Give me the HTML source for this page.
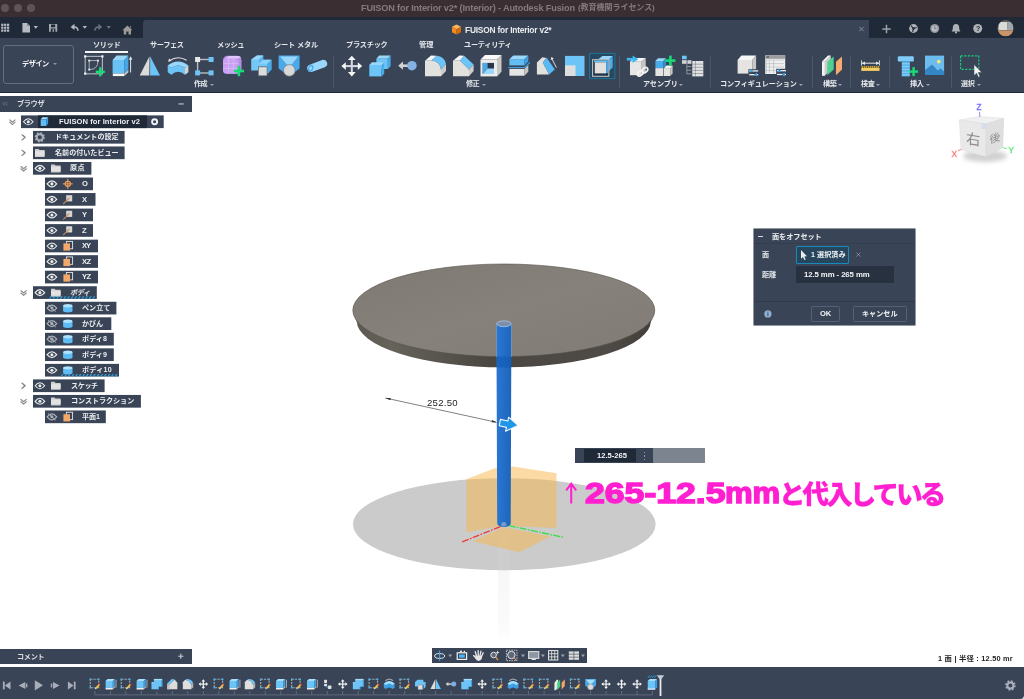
<!DOCTYPE html><html lang="ja"><head><meta charset="utf-8"><title>FUISON for Interior v2</title><style>
*{box-sizing:border-box;margin:0;padding:0}
html,body{width:1024px;height:699px;overflow:hidden;background:#fff}
body{position:relative;font-family:"Liberation Sans","Noto Sans CJK JP",sans-serif;font-size:7px;font-weight:bold;color:#e4e7eb}
.a{position:absolute}
.t{position:absolute;white-space:nowrap;line-height:10px;height:10px;will-change:transform}
.row{position:absolute;height:12.6px;background:#394456}
svg{position:absolute;left:0;top:0;overflow:visible}
</style></head><body>
<div class="a" style="left:0;top:0;width:1024px;height:17px;background:#3b2e32"></div>
<div class="a" style="left:0.5999999999999996px;top:4.4px;width:8px;height:8px;border-radius:50%;background:#5f5258"></div>
<div class="a" style="left:13.5px;top:4.4px;width:8px;height:8px;border-radius:50%;background:#5f5258"></div>
<div class="a" style="left:26.5px;top:4.4px;width:8px;height:8px;border-radius:50%;background:#5f5258"></div>
<div class="t" style="left:361px;top:2.6px;font-size:9.2px;color:#85797d;letter-spacing:-0.17px;">FUISON for Interior v2* (Interior) - Autodesk Fusion</div>
<div class="t" style="left:578.2px;top:2.6px;font-size:8px;color:#85797d;letter-spacing:-0.04px;">(教育機関ライセンス)</div>
<div class="a" style="left:0;top:17px;width:1024px;height:21px;background:#202938"></div>
<div class="a" style="left:143px;top:20px;width:726px;height:18px;background:#394456;border-radius:3px 0 0 0"></div>
<div class="t" style="left:464.6px;top:25.0px;font-size:8.4px;color:#e9ebee;letter-spacing:-0.21px;">FUISON for Interior v2*</div>
<div class="a" style="left:0;top:38px;width:1024px;height:53.8px;background:#394456"></div>
<div class="a" style="left:0;top:91.8px;width:1024px;height:1.3px;background:#1f2a3a"></div>
<div class="a" style="left:3px;top:45.2px;width:70.6px;height:39.2px;border:1px solid #626f83;border-radius:3px"></div>
<div class="t" style="left:21.5px;top:59.0px;font-size:7.2px;color:#f2f3f5;letter-spacing:-0.49px;">デザイン</div>
<div class="a" style="left:53px;top:63px;width:0;height:0;border:2px solid transparent;border-top:2.6px solid #8b94a1"></div>
<div class="t" style="left:93.2px;top:40.0px;font-size:7.2px;color:#e4e7eb;letter-spacing:-0.39px;">ソリッド</div>
<div class="t" style="left:149.8px;top:40.0px;font-size:7.2px;color:#e4e7eb;letter-spacing:-0.38px;">サーフェス</div>
<div class="t" style="left:216.6px;top:40.0px;font-size:7.2px;color:#e4e7eb;letter-spacing:-0.46px;">メッシュ</div>
<div class="t" style="left:273.5px;top:40.0px;font-size:7.2px;color:#e4e7eb;letter-spacing:-0.17px;">シート メタル</div>
<div class="t" style="left:346.4px;top:40.0px;font-size:7.2px;color:#e4e7eb;letter-spacing:-0.24px;">プラスチック</div>
<div class="t" style="left:419.2px;top:40.0px;font-size:7.2px;color:#e4e7eb;letter-spacing:0.01px;">管理</div>
<div class="t" style="left:463.7px;top:40.0px;font-size:7.2px;color:#e4e7eb;letter-spacing:-0.29px;">ユーティリティ</div>
<div class="a" style="left:84.8px;top:51.3px;width:43.7px;height:2px;background:#f4f5f6"></div>
<div class="t" style="left:194.4px;top:79.4px;font-size:7.1px;color:#e6e8ec;letter-spacing:-0.49px;">作成</div>
<div class="a" style="left:210px;top:83.6px;width:0;height:0;border:2px solid transparent;border-top:2.4px solid #9aa2ae"></div>
<div class="t" style="left:466px;top:79.4px;font-size:7.1px;color:#e6e8ec;letter-spacing:-0.49px;">修正</div>
<div class="a" style="left:482.2px;top:83.6px;width:0;height:0;border:2px solid transparent;border-top:2.4px solid #9aa2ae"></div>
<div class="t" style="left:643.3px;top:79.4px;font-size:7.1px;color:#e6e8ec;letter-spacing:-0.08px;">アセンブリ</div>
<div class="a" style="left:679.4px;top:83.6px;width:0;height:0;border:2px solid transparent;border-top:2.4px solid #9aa2ae"></div>
<div class="t" style="left:720px;top:79.4px;font-size:7.1px;color:#e6e8ec;letter-spacing:-0.06px;">コンフィギュレーション</div>
<div class="a" style="left:798.5px;top:83.6px;width:0;height:0;border:2px solid transparent;border-top:2.4px solid #9aa2ae"></div>
<div class="t" style="left:822.7px;top:79.4px;font-size:7.1px;color:#e6e8ec;letter-spacing:-0.29px;">構築</div>
<div class="a" style="left:838.3px;top:83.6px;width:0;height:0;border:2px solid transparent;border-top:2.4px solid #9aa2ae"></div>
<div class="t" style="left:861.2px;top:79.4px;font-size:7.1px;color:#e6e8ec;letter-spacing:-0.39px;">検査</div>
<div class="a" style="left:876.4px;top:83.6px;width:0;height:0;border:2px solid transparent;border-top:2.4px solid #9aa2ae"></div>
<div class="t" style="left:910px;top:79.4px;font-size:7.1px;color:#e6e8ec;letter-spacing:-0.29px;">挿入</div>
<div class="a" style="left:925.6px;top:83.6px;width:0;height:0;border:2px solid transparent;border-top:2.4px solid #9aa2ae"></div>
<div class="t" style="left:961.4px;top:79.4px;font-size:7.1px;color:#e6e8ec;letter-spacing:-0.39px;">選択</div>
<div class="a" style="left:977px;top:83.6px;width:0;height:0;border:2px solid transparent;border-top:2.4px solid #9aa2ae"></div>
<div class="a" style="left:333.3px;top:55.5px;width:1px;height:32px;background:#4b5667"></div>
<div class="a" style="left:618.5px;top:55.5px;width:1px;height:32px;background:#4b5667"></div>
<div class="a" style="left:709.5px;top:55.5px;width:1px;height:32px;background:#4b5667"></div>
<div class="a" style="left:812.0px;top:55.5px;width:1px;height:32px;background:#4b5667"></div>
<div class="a" style="left:850.1px;top:55.5px;width:1px;height:32px;background:#4b5667"></div>
<div class="a" style="left:888.7px;top:55.5px;width:1px;height:32px;background:#4b5667"></div>
<div class="a" style="left:951.2px;top:55.5px;width:1px;height:32px;background:#4b5667"></div>
<svg width="1024" height="100" viewBox="0 0 1024 100"><rect x="1.2" y="23.7" width="2.2" height="2.2" fill="#b9bdc5" /><rect x="1.2" y="26.599999999999998" width="2.2" height="2.2" fill="#b9bdc5" /><rect x="1.2" y="29.5" width="2.2" height="2.2" fill="#b9bdc5" /><rect x="4.1" y="23.7" width="2.2" height="2.2" fill="#b9bdc5" /><rect x="4.1" y="26.599999999999998" width="2.2" height="2.2" fill="#b9bdc5" /><rect x="4.1" y="29.5" width="2.2" height="2.2" fill="#b9bdc5" /><rect x="7.0" y="23.7" width="2.2" height="2.2" fill="#b9bdc5" /><rect x="7.0" y="26.599999999999998" width="2.2" height="2.2" fill="#b9bdc5" /><rect x="7.0" y="29.5" width="2.2" height="2.2" fill="#b9bdc5" /><path d="M22.4 23 H27 L30 26 V32.6 H22.4Z" fill="#b6bac1" /><path d="M27 23 L30 26 H27Z" fill="#7d8590" /><path d="M33.6 26 H38 L35.8 28.8Z" fill="#b6bac1" /><path d="M49 24 H57.2 V31.8 H49Z M51 24.6 V27.2 H55.2 V24.6Z M50.8 28.6 V31.8 H55.4 V28.6Z" fill="#a2a8b1" fill-rule="evenodd"/><rect x="52.6" y="29.2" width="1.3" height="2.6" fill="#a2a8b1" /><path d="M70.6 26.9 L74.5 23.8 V30Z" fill="#b6bac1" /><path d="M74 26.9 Q77.7 26.7 78 30.8" fill="none" stroke="#b6bac1" stroke-width="1.5"/><path d="M82.6 26 H87 L84.8 28.8Z" fill="#b6bac1" /><path d="M102.2 26.9 L98.3 23.8 V30Z" fill="#6a7382" /><path d="M98.8 26.9 Q95.1 26.7 94.8 30.8" fill="none" stroke="#6a7382" stroke-width="1.5"/><path d="M106.5 26 H110.9 L108.7 28.8Z" fill="#6a7382" /><path d="M127.4 25.6 L122.4 30.2 H123.8 V34.6 H126.3 V31.6 H128.5 V34.6 H131 V30.2 H132.4Z M130 26.2 H131 V28 L130 27.2Z" fill="#9d9b97" /><path d="M456.5 24.6 L461 26.8 L456.5 29.2 L452 26.8Z" fill="#ffb45e" /><path d="M452 26.8 L456.5 29.2 V34.6 L452 32.2Z" fill="#f58a1f" /><path d="M461 26.8 L456.5 29.2 V34.6 L461 32.2Z" fill="#d96c0a" /><line x1="859.3" y1="26.9" x2="863.7" y2="31.3" stroke="#8d95a0" stroke-width="0.9" /><line x1="863.7" y1="26.9" x2="859.3" y2="31.3" stroke="#8d95a0" stroke-width="0.9" /><rect x="882.3" y="28.3" width="8.4" height="1.5" fill="#9ba0a8" /><rect x="885.75" y="24.8" width="1.5" height="8.4" fill="#9ba0a8" /><circle cx="913.5" cy="28.5" r="4.4" fill="#aeb1b6" /><path d="M913.5 28.5 L911 25.6 M913.5 28.5 L916.6 27.4 M913.5 28.5 L912.6 32" fill="none" stroke="#202938" stroke-width="1.1"/><circle cx="913.5" cy="28.5" r="1.2" fill="#202938" /><circle cx="934.7" cy="28.5" r="4.5" fill="#8f949c" /><circle cx="934.7" cy="28.5" r="3.1" fill="#b9bcc1" /><path d="M934.7 26.3 V28.7 H936.6" fill="none" stroke="#6b717b" stroke-width="0.9"/><path d="M956 24 Q959.2 24.2 959.2 28 Q959.2 30.6 960.4 31.4 H951.6 Q952.8 30.6 952.8 28 Q952.8 24.2 956 24Z" fill="#aeb1b6" /><circle cx="956" cy="32.4" r="1.1" fill="#aeb1b6" /><circle cx="977.7" cy="28.5" r="4.5" fill="#aeb1b6" /><circle cx="1005.6" cy="28.3" r="8" fill="#6d6a66" /><clipPath id="av"><circle cx="1005.6" cy="28.3" r="8"/></clipPath><g clip-path="url(#av)"><rect x="997" y="20" width="18" height="9" fill="#5b5d5e"/><rect x="998.5" y="22" width="9" height="8" fill="#d9dcd6"/><rect x="1008" y="22" width="5" height="8" fill="#9ea7ad"/><rect x="997" y="30.5" width="18" height="6" fill="#c8946a"/></g><rect x="85.2" y="56.4" width="17.2" height="17.4" fill="none" stroke="#a9b0b9" stroke-width="1.2"/><rect x="84.10000000000001" y="55.3" width="2.2" height="2.2" fill="#f2f2f2" /><rect x="101.30000000000001" y="55.3" width="2.2" height="2.2" fill="#f2f2f2" /><rect x="84.10000000000001" y="72.5" width="2.2" height="2.2" fill="#f2f2f2" /><path d="M89.2 60.6 H98 Q98 69.6 89.2 69.6Z" fill="none" stroke="#b4bac2" stroke-width="0.9"/><rect x="88.3" y="59.7" width="1.8" height="1.8" fill="#f2f2f2" /><rect x="97.1" y="59.7" width="1.8" height="1.8" fill="#f2f2f2" /><rect x="88.3" y="68.69999999999999" width="1.8" height="1.8" fill="#f2f2f2" /><rect x="95.8" y="70.6" width="9.0" height="2.4" fill="#18dc76" /><rect x="99.1" y="67.3" width="2.4" height="9.0" fill="#18dc76" /><rect x="112.6" y="60" width="11.8" height="13.4" fill="#68c2f5" /><path d="M112.6 60 L116.6 55.6 L128.39999999999998 55.6 L124.39999999999999 60Z" fill="#9ad8fb" /><path d="M124.39999999999999 60 L128.39999999999998 55.6 L128.39999999999998 69.0 L124.39999999999999 73.4Z" fill="#46a6e8" /><rect x="112.8" y="73.5" width="11.6" height="2.6" fill="#f6f6f6" /><path d="M124.4 73.5 L128.4 69.6 V72.2 L124.4 76.1Z" fill="#c6c6c6" /><line x1="130.6" y1="58" x2="130.6" y2="72.5" stroke="#e6e6e6" stroke-width="1" /><path d="M128.8 59.8 L130.6 56.2 L132.4 59.8Z" fill="#e6e6e6" /><path d="M149.5 56.3 L139.7 75.4 H149.3Z" fill="#dadada" /><path d="M150.1 56.3 V75.4 H160Z" fill="#6cc5f6" /><path d="M169.6 60.6 Q178 55 186.6 60.2" fill="none" stroke="#e6e6e6" stroke-width="1.1"/><path d="M168 61.8 L169.2 58.4 L171.6 61Z" fill="#e6e6e6" /><path d="M167.7 65.4 Q178 57.4 188.4 65.4 L185 68 Q178 63.2 171.4 68Z" fill="#9ad8fb" /><path d="M167.7 65.4 L171.4 68 Q178 63.2 185 68 V74.8 Q178 68.6 171.4 74.8 L167.7 72.2Z" fill="#6cc5f6" /><path d="M185 68 L188.4 65.4 V72.2 L185 74.8Z" fill="#d6d4d1" /><line x1="197.5" y1="59.5" x2="209" y2="59.5" stroke="#b9bdc3" stroke-width="1.4" /><line x1="197.6" y1="59.5" x2="197.6" y2="73" stroke="#b9bdc3" stroke-width="1.4" /><line x1="197.5" y1="73" x2="209" y2="73" stroke="#b9bdc3" stroke-width="1.4" /><rect x="195.1" y="57" width="5" height="5" fill="#e9e9e9" /><rect x="208.6" y="57" width="5" height="5" fill="#6cc5f6" /><rect x="195.1" y="70.4" width="5" height="5" fill="#6cc5f6" /><rect x="208.6" y="70.4" width="5" height="5" fill="#6cc5f6" /><rect x="223" y="55.8" width="18.5" height="18" fill="#b98be8" rx="4.5"/><rect x="223" y="58.2" width="15.6" height="15.6" fill="#c9a0f2" rx="3.6"/><path d="M225.4 58.4 L228.6 55.9 H238.6 Q240.4 56 241 57.4 L237.6 58.4Z" fill="#e0c6fb" /><line x1="228.4" y1="58.6" x2="228.4" y2="73.4" stroke="#dcc2f8" stroke-width="0.7" /><line x1="233.4" y1="58.6" x2="233.4" y2="73.4" stroke="#dcc2f8" stroke-width="0.7" /><line x1="223.4" y1="63.4" x2="238.4" y2="63.4" stroke="#dcc2f8" stroke-width="0.7" /><line x1="223.4" y1="68.4" x2="238.4" y2="68.4" stroke="#dcc2f8" stroke-width="0.7" /><rect x="233.70000000000002" y="69.7" width="10.4" height="2.6" fill="#18dc76" /><rect x="237.6" y="65.8" width="2.6" height="10.4" fill="#18dc76" /><path d="M251.2 59.4 L257 55.4 H263.2 V59.8 H271.4 V69.4 L267.2 74 V66.8 H258.2 V70.4 H251.2Z" fill="#74c8f6" /><path d="M251.2 59.4 L257 55.4 H263.2 L259 59.4Z" fill="#9ad8fb" /><path d="M259 59.4 L263.2 59.8 H271.4 L267.2 63.8 H259Z" fill="#8ed3f9" /><path d="M267.2 63.8 L271.4 59.8 V69.4 L267.2 74Z" fill="#4aa9e9" /><path d="M259 59.4 L263.2 55.4 V59.8 L259 63.4Z" fill="#58b4ee" /><rect x="258.4" y="66.9" width="8.6" height="8.9" fill="#dedcd9" stroke="#5f6975" stroke-width="0.6"/><path d="M278.6 55.6 H299.6 V68.4 L295 72 H283.4 L278.6 68.4Z" fill="#4aa9e9" /><path d="M280.2 56.4 H298 L289.3 67.5Z" fill="#9ad8fb" /><circle cx="289.3" cy="70.4" r="5.8" fill="#d8d8d8" stroke="#6e7883" stroke-width="0.7"/><line x1="311" y1="68.2" x2="323.4" y2="63.6" stroke="#9ad8fb" stroke-width="7.6" stroke-linecap="round"/><ellipse cx="310.6" cy="68.3" rx="2.6" ry="3.7" transform="rotate(20 310.6 68.3)" fill="#4aa9e9"/><ellipse cx="310.6" cy="68.3" rx="1.3" ry="2.2" transform="rotate(20 310.6 68.3)" fill="#9ad8fb"/><line x1="343.8" y1="66.1" x2="359.8" y2="66.1" stroke="#d4d7dc" stroke-width="2.1" /><line x1="351.8" y1="58.099999999999994" x2="351.8" y2="74.1" stroke="#d4d7dc" stroke-width="2.1" /><path d="M341.40000000000003 66.1 l4.4 -3.9 v7.8Z M362.2 66.1 l-4.4 -3.9 v7.8Z M351.8 55.699999999999996 l-3.9 4.4 h7.8Z M351.8 76.5 l-3.9 -4.4 h7.8Z" fill="#f4f4f4" /><rect x="376.4" y="58.4" width="11.4" height="10.6" fill="#6cc5f6" /><path d="M376.4 58.4 L379.2 55.6 L390.59999999999997 55.6 L387.79999999999995 58.4Z" fill="#9ad8fb" /><path d="M387.79999999999995 58.4 L390.59999999999997 55.6 L390.59999999999997 66.2 L387.79999999999995 69.0Z" fill="#4aa9e9" /><rect x="369.3" y="65" width="12.3" height="11.4" fill="#6cc5f6" /><path d="M369.3 65 L371.90000000000003 62.3 L384.20000000000005 62.3 L381.6 65Z" fill="#9ad8fb" /><path d="M381.6 65 L384.20000000000005 62.3 L384.20000000000005 73.7 L381.6 76.4Z" fill="#4aa9e9" /><circle cx="411.9" cy="65.7" r="4.8" fill="#86b1e5" /><rect x="401.5" y="64.4" width="6" height="2.6" fill="#d2d2d2" /><path d="M398.2 65.7 L403 61.6 V69.8Z" fill="#d2d2d2" /><path d="M425 60.8 L431.6 60.6 Q439.6 61 441 69.6 V76.3 H425Z" fill="#e3e1de" /><path d="M425 60.8 L431 55.5 L436.6 55.7 L431.6 60.6Z" fill="#f6f6f6" /><path d="M431.6 60.6 L436.6 55.7 Q444.6 56.4 446 64 L441 69.6 Q439.6 61 431.6 60.6Z" fill="#6cc5f6" /><path d="M441 69.6 L446 64 V71 L441 76.3Z" fill="#cfcdca" /><path d="M453 60.8 L460 60.6 L469 69.6 V76.3 H453Z" fill="#e3e1de" /><path d="M453 60.8 L459.4 55.5 L464.2 55.8 L460 60.6Z" fill="#f6f6f6" /><path d="M460 60.6 L464.2 55.8 L473.6 64.4 L469 69.6Z" fill="#6cc5f6" /><path d="M469 69.6 L473.6 64.4 V71 L469 76.3Z" fill="#cfcdca" /><rect x="480.5" y="59.6" width="16.5" height="16.8" fill="#ececec" /><path d="M480.5 59.6 L485.0 55.0 L501.5 55.0 L497.0 59.6Z" fill="#fafafa" /><path d="M497.0 59.6 L501.5 55.0 L501.5 71.80000000000001 L497.0 76.4Z" fill="#c9c7c4" /><rect x="482.7" y="62.9" width="11.3" height="11.1" fill="#2a3648" /><path d="M482.7 62.9 H487.6 V68.4 L482.7 74Z" fill="#4aa9e9" /><path d="M482.7 74 L487.6 68.4 H494 V74Z" fill="#9ad8fb" /><rect x="509.4" y="59.2" width="15" height="6.2" fill="#62bdf4" /><path d="M509.4 59.2 L513.3 55.400000000000006 L528.3 55.400000000000006 L524.4 59.2Z" fill="#9ad8fb" /><path d="M524.4 59.2 L528.3 55.400000000000006 L528.3 61.60000000000001 L524.4 65.4Z" fill="#3f9fe3" /><path d="M508.2 67.5 H524.6 L529.9 62.4" fill="none" stroke="#3f9fe3" stroke-width="1.2"/><rect x="509.4" y="68.9" width="15" height="6.8" fill="#e4e4e4" /><path d="M524.4 68.9 L528.3 65 V71.8 L524.4 75.7Z" fill="#c6c6c6" /><path d="M536.9 74.4 V62.5 L542.4 57.2 L546.4 58 L542.8 62.6 L549.1 74.4Z" fill="#e3e1de" /><path d="M542.8 62.6 L546.8 57.7 L554.8 69.6 L549.1 74.4Z" fill="#5ab8f3" /><line x1="552" y1="59" x2="556.4" y2="67.6" stroke="#eeeeee" stroke-width="0.9" /><path d="M550.6 60 L551.4 56.9 L553.8 58.6Z" fill="#eeeeee" /><rect x="565" y="55.9" width="19.5" height="20.1" fill="#6cc5f6" /><rect x="565" y="65.3" width="10.5" height="10.7" fill="#dedede" /><rect x="589.6" y="53.4" width="25.2" height="25.2" fill="#27495f" stroke="#1d7599" stroke-width="1"/><path d="M598 59.6 L602.4 56 H612.7 L609 59.6Z" fill="#9ad8fb" /><path d="M609 59.6 L612.7 56 V67.2 L609 71Z" fill="#4aa9e9" /><rect x="592.6" y="59.7" width="16.2" height="16.6" fill="#1f3448" stroke="#c2c2c2" stroke-width="1.1"/><rect x="594.2" y="60.4" width="13.8" height="2" fill="#6cc5f6" /><rect x="606.2" y="60.4" width="1.9" height="12.8" fill="#4aa9e9" /><rect x="594.8" y="62.4" width="11.3" height="11" fill="#e2e0de" /><rect x="630" y="61.4" width="11.7" height="13.8" fill="#e6e6e6" /><path d="M630 61.4 L634 57.9 L645.7 57.9 L641.7 61.4Z" fill="#f6f6f6" /><path d="M641.7 61.4 L645.7 57.9 L645.7 71.7 L641.7 75.2Z" fill="#c9c7c4" /><rect x="626.8" y="57.9" width="7" height="2.6" fill="#3db8f5" /><path d="M632.6 55.4 L638.4 59.2 L632.6 63Z" fill="#3db8f5" /><g fill="none" stroke="#f4f4f4" stroke-width="1.6"><ellipse cx="640.2" cy="73.4" rx="3.3" ry="2.2" transform="rotate(-36 640.2 73.4)"/><ellipse cx="644.8" cy="70.2" rx="3.3" ry="2.2" transform="rotate(-36 644.8 70.2)"/></g><rect x="655.4" y="61" width="8" height="7.4" fill="#4aa9e9" /><path d="M655.4 61 L658.0 58.2 L666.0 58.2 L663.4 61Z" fill="#9ad8fb" /><path d="M663.4 61 L666.0 58.2 L666.0 65.60000000000001 L663.4 68.4Z" fill="#2e8fd8" /><rect x="655.4" y="68.2" width="8" height="7.8" fill="#e6e4e2" /><rect x="664" y="68.2" width="6.2" height="7.8" fill="#e6e4e2" /><path d="M664 68.2 L666.4 65.60000000000001 L672.6 65.60000000000001 L670.2 68.2Z" fill="#f6f6f6" /><path d="M670.2 68.2 L672.6 65.60000000000001 L672.6 73.4 L670.2 76.0Z" fill="#c9c7c4" /><rect x="665.4" y="59.300000000000004" width="10" height="2.6" fill="#18dc76" /><rect x="669.1" y="55.6" width="2.6" height="10" fill="#18dc76" /><rect x="682" y="55.7" width="4.7" height="3.6" fill="#6cc5f6" /><rect x="682" y="60.2" width="4.7" height="3.6" fill="#d0d3d8" /><rect x="687.4" y="60.2" width="4" height="3.6" fill="#d0d3d8" /><line x1="686.8" y1="64" x2="686.8" y2="74" stroke="#aab0b8" stroke-width="0.7" /><line x1="686.8" y1="66.6" x2="691.4" y2="66.6" stroke="#aab0b8" stroke-width="0.8" /><line x1="686.8" y1="70.2" x2="691.4" y2="70.2" stroke="#aab0b8" stroke-width="0.8" /><line x1="686.8" y1="73.8" x2="691.4" y2="73.8" stroke="#aab0b8" stroke-width="0.8" /><rect x="692.3" y="61" width="11" height="15.4" fill="#e2e2e2" /><line x1="692.3" y1="64.2" x2="703.3" y2="64.2" stroke="#737d8a" stroke-width="0.6" /><line x1="692.3" y1="67.3" x2="703.3" y2="67.3" stroke="#737d8a" stroke-width="0.6" /><line x1="692.3" y1="70.4" x2="703.3" y2="70.4" stroke="#737d8a" stroke-width="0.6" /><line x1="692.3" y1="73.5" x2="703.3" y2="73.5" stroke="#737d8a" stroke-width="0.6" /><line x1="695.4" y1="61" x2="695.4" y2="76.4" stroke="#737d8a" stroke-width="0.6" /><rect x="737.6" y="60" width="14.7" height="13.6" fill="#e6e4e2" /><path d="M737.6 60 L741.4 55.4 L756.1 55.4 L752.3000000000001 60Z" fill="#f6f6f6" /><path d="M752.3000000000001 60 L756.1 55.4 L756.1 69.0 L752.3000000000001 73.6Z" fill="#c9c7c4" /><rect x="748.4" y="69.2" width="10.6" height="7.4" fill="#394456" /><line x1="749.2" y1="70.9" x2="758.2" y2="70.9" stroke="#f2f2f2" stroke-width="1.3" /><line x1="749.2" y1="74.7" x2="758.2" y2="74.7" stroke="#f2f2f2" stroke-width="1.3" /><path d="M750.4000000000001 69.0 l3.2 1.9 l-3.2 1.9Z" fill="#2fa4f0" /><path d="M757.0 72.80000000000001 l-3.2 1.9 l3.2 1.9Z" fill="#2fa4f0" /><rect x="765.2" y="55.4" width="20" height="18.6" fill="#efefef" /><rect x="765.2" y="55.4" width="20" height="3.4" fill="#9c9c9c" /><rect x="766.6" y="56.4" width="2.4" height="1.2" fill="#4d4d4d" /><line x1="769.4" y1="60" x2="769.4" y2="73" stroke="#a5aab1" stroke-width="0.5" /><line x1="773.6" y1="60" x2="773.6" y2="73" stroke="#a5aab1" stroke-width="0.5" /><line x1="766.4" y1="63.6" x2="784" y2="63.6" stroke="#a5aab1" stroke-width="0.5" /><line x1="766.4" y1="67" x2="784" y2="67" stroke="#a5aab1" stroke-width="0.5" /><line x1="766.4" y1="70.4" x2="784" y2="70.4" stroke="#a5aab1" stroke-width="0.5" /><line x1="766.4" y1="60" x2="784" y2="60" stroke="#a5aab1" stroke-width="0.5" /><line x1="766.4" y1="60" x2="766.4" y2="73" stroke="#a5aab1" stroke-width="0.5" /><rect x="776.2" y="68.8" width="10.4" height="7.8" fill="#394456" /><line x1="777" y1="70.7" x2="786" y2="70.7" stroke="#f2f2f2" stroke-width="1.3" /><line x1="777" y1="74.5" x2="786" y2="74.5" stroke="#f2f2f2" stroke-width="1.3" /><path d="M778.2 68.8 l3.2 1.9 l-3.2 1.9Z" fill="#2fa4f0" /><path d="M784.8 72.60000000000001 l-3.2 1.9 l3.2 1.9Z" fill="#2fa4f0" /><path d="M824.8 61.4 L830.8 55.4 V69.6 L824.8 75.8Z" fill="#cfcdca" /><rect x="822" y="61.4" width="2.9" height="14.4" fill="#f4f4f4" /><path d="M822 61.4 L828 55.4 H830.8 L824.8 61.4Z" fill="#fafafa" /><path d="M827.3 61.8 L833.7 56.4 V69.4 L827.3 75.3Z" fill="#4fd191" /><path d="M836 61.8 L842 56.4 V69.4 L836 75.3Z" fill="#f6ab6e" /><line x1="862" y1="63.2" x2="879" y2="63.2" stroke="#e6e6e6" stroke-width="1" /><line x1="861.5" y1="60.4" x2="861.5" y2="65.6" stroke="#e6e6e6" stroke-width="0.9" /><line x1="879.4" y1="60.4" x2="879.4" y2="65.6" stroke="#e6e6e6" stroke-width="0.9" /><path d="M861.8 63.2 l3.2 -1.7 v3.4Z M879.2 63.2 l-3.2 -1.7 v3.4Z" fill="#e6e6e6" /><rect x="861.3" y="66" width="18.2" height="2.2" fill="#7a6428" /><rect x="861.3" y="68" width="18.2" height="2.9" fill="#f3cf63" /><line x1="862.4" y1="66" x2="862.4" y2="68" stroke="#e9c455" stroke-width="0.7" /><line x1="864.4" y1="66" x2="864.4" y2="68" stroke="#e9c455" stroke-width="0.7" /><line x1="866.4" y1="66" x2="866.4" y2="68" stroke="#e9c455" stroke-width="0.7" /><line x1="868.4" y1="66" x2="868.4" y2="68" stroke="#e9c455" stroke-width="0.7" /><line x1="870.4" y1="66" x2="870.4" y2="68" stroke="#e9c455" stroke-width="0.7" /><line x1="872.4" y1="66" x2="872.4" y2="68" stroke="#e9c455" stroke-width="0.7" /><line x1="874.4" y1="66" x2="874.4" y2="68" stroke="#e9c455" stroke-width="0.7" /><line x1="876.4" y1="66" x2="876.4" y2="68" stroke="#e9c455" stroke-width="0.7" /><line x1="878.4" y1="66" x2="878.4" y2="68" stroke="#e9c455" stroke-width="0.7" /><rect x="897.8" y="56.2" width="16" height="5.4" fill="#7fcdf8" rx="1.2"/><rect x="901.8" y="61.6" width="8" height="14.8" fill="#5ab5ee" /><line x1="901.8" y1="63.8" x2="909.8" y2="63.8" stroke="#9ad8fb" stroke-width="0.8" /><line x1="901.8" y1="66.6" x2="909.8" y2="66.6" stroke="#9ad8fb" stroke-width="0.8" /><line x1="901.8" y1="69.4" x2="909.8" y2="69.4" stroke="#9ad8fb" stroke-width="0.8" /><line x1="901.8" y1="72.2" x2="909.8" y2="72.2" stroke="#9ad8fb" stroke-width="0.8" /><line x1="901.8" y1="75" x2="909.8" y2="75" stroke="#9ad8fb" stroke-width="0.8" /><rect x="909.1" y="70.39999999999999" width="9.0" height="2.4" fill="#18dc76" /><rect x="912.4" y="67.1" width="2.4" height="9.0" fill="#18dc76" /><rect x="925" y="55.6" width="19.1" height="19.4" fill="#6dbcee" /><circle cx="938.8" cy="61.6" r="1.9" fill="#f7e77a" /><path d="M925 75 V70 L932.1 64.4 L937.6 70.4 L940.7 68.4 L944.1 71.4 V75Z" fill="#3486c6" /><rect x="960.6" y="55.8" width="18.2" height="13.6" fill="none" stroke="#19c97a" stroke-width="1.2" stroke-dasharray="2.3 1.3"/><path d="M974 64.4 V75.6 L976.6 73.2 L978.4 77.2 L980 76.4 L978.2 72.6 L981.8 72.4Z" fill="#f4f4f4" stroke="#394456" stroke-width="0.5"/></svg>
<div class="t" style="left:976.1px;top:23.8px;font-size:7px;color:#202938;">?</div>
<div class="a" style="left:0;top:96px;width:192px;height:15.6px;background:#394456"></div>
<div class="t" style="left:16.6px;top:99.0px;font-size:7.2px;color:#d9dce1;letter-spacing:-0.39px;">ブラウザ</div>
<svg width="200" height="440" viewBox="0 0 200 440"><rect x="21" y="115.40" width="142.7" height="12.7" fill="#394456"/><rect x="38" y="115.40" width="109" height="12.7" fill="#202938"/><rect x="33" y="130.93" width="91.6" height="12.7" fill="#394456"/><rect x="33" y="146.46" width="91.6" height="12.7" fill="#394456"/><rect x="33" y="161.99" width="58.4" height="12.7" fill="#394456"/><rect x="45" y="177.52" width="48.0" height="12.7" fill="#394456"/><rect x="45" y="193.05" width="50.5" height="12.7" fill="#394456"/><rect x="45" y="208.58" width="48.0" height="12.7" fill="#394456"/><rect x="45" y="224.11" width="48.0" height="12.7" fill="#394456"/><rect x="45" y="239.64" width="53.0" height="12.7" fill="#394456"/><rect x="45" y="255.17" width="53.0" height="12.7" fill="#394456"/><rect x="45" y="270.70" width="53.0" height="12.7" fill="#394456"/><rect x="33" y="286.23" width="63.8" height="12.7" fill="#394456"/><rect x="45" y="301.76" width="71.4" height="12.7" fill="#394456"/><rect x="45" y="317.29" width="66.3" height="12.7" fill="#394456"/><rect x="45" y="332.82" width="68.8" height="12.7" fill="#394456"/><rect x="45" y="348.35" width="68.8" height="12.7" fill="#394456"/><rect x="45" y="363.88" width="74.0" height="12.7" fill="#394456"/><rect x="33" y="379.41" width="71.6" height="12.7" fill="#394456"/><rect x="33" y="394.94" width="107.9" height="12.7" fill="#394456"/><rect x="45" y="410.47" width="60.8" height="12.7" fill="#394456"/></svg>
<div class="t" style="left:58.6px;top:116.85px;font-size:7.6px;color:#eceef1;letter-spacing:0.06px;">FUISON for Interior v2</div>
<div class="t" style="left:54.7px;top:132.38px;font-size:7.1px;color:#eceef1;letter-spacing:-0.03px;">ドキュメントの設定</div>
<div class="t" style="left:54.7px;top:147.91px;font-size:7.1px;color:#eceef1;letter-spacing:-0.03px;">名前の付いたビュー</div>
<div class="t" style="left:70.3px;top:163.44px;font-size:7.1px;color:#eceef1;letter-spacing:0.51px;">原点</div>
<div class="t" style="left:82px;top:178.97px;font-size:7.6px;color:#eceef1;letter-spacing:-0.72px;">O</div>
<div class="t" style="left:82px;top:194.5px;font-size:7.6px;color:#eceef1;letter-spacing:-0.08px;">X</div>
<div class="t" style="left:82px;top:210.03px;font-size:7.6px;color:#eceef1;letter-spacing:-0.08px;">Y</div>
<div class="t" style="left:82px;top:225.56px;font-size:7.6px;color:#eceef1;letter-spacing:0.36px;">Z</div>
<div class="t" style="left:82px;top:241.09px;font-size:7.6px;color:#eceef1;letter-spacing:-0.94px;">XY</div>
<div class="t" style="left:82px;top:256.62px;font-size:7.6px;color:#eceef1;letter-spacing:-0.52px;">XZ</div>
<div class="t" style="left:82px;top:272.15px;font-size:7.6px;color:#eceef1;letter-spacing:-0.52px;">YZ</div>
<div class="t" style="left:70px;top:287.68px;font-size:7.1px;color:#eceef1;letter-spacing:-0.30px;font-style:italic;">ボディ</div>
<div class="t" style="left:82px;top:303.21px;font-size:7.1px;color:#eceef1;letter-spacing:-0.03px;">ペン立て</div>
<div class="t" style="left:82px;top:318.74px;font-size:7.1px;color:#eceef1;letter-spacing:-0.04px;">かびん</div>
<div class="t" style="left:82px;top:334.27px;font-size:7.1px;color:#eceef1;letter-spacing:0.09px;">ボディ8</div>
<div class="t" style="left:82px;top:349.8px;font-size:7.1px;color:#eceef1;letter-spacing:0.09px;">ボディ9</div>
<div class="t" style="left:82px;top:365.33px;font-size:7.1px;color:#eceef1;letter-spacing:0.23px;">ボディ10</div>
<div class="t" style="left:70.8px;top:380.86px;font-size:7.1px;color:#eceef1;letter-spacing:-0.39px;">スケッチ</div>
<div class="t" style="left:70.8px;top:396.39px;font-size:7.1px;color:#eceef1;letter-spacing:-0.06px;">コンストラクション</div>
<div class="t" style="left:82px;top:411.92px;font-size:7.1px;color:#eceef1;letter-spacing:-0.07px;">平面1</div>
<svg width="200" height="440" viewBox="0 0 200 440"><path d="M4.6 102 L3 103.8 L4.6 105.6 M7.4 102 L5.8 103.8 L7.4 105.6" fill="none" stroke="#6f7987" stroke-width="0.9"/><rect x="178.5" y="103.4" width="5.2" height="1.1" fill="#c5c9cf" /><path d="M23.5 121.75 Q28.3 115.75 33.1 121.75 Q28.3 127.75 23.5 121.75Z" fill="none" stroke="#eceded" stroke-width="1.15"/><circle cx="28.3" cy="121.75" r="1.55" fill="#eceded"/><path d="M40.699999999999996 119.35 l1.8 -2.2 h5.6 l-1.8 2.2Z" fill="#a6defc" /><rect x="40.699999999999996" y="119.35" width="5.6" height="6.6" fill="#62bdf4" /><path d="M46.3 119.35 l1.8 -2.2 v6.6 l-1.8 2.2Z" fill="#3f9fe3" /><circle cx="154.6" cy="121.75" r="2.5" fill="none" stroke="#f2f2f2" stroke-width="1.9"/><path d="M9.4 119.55 L12.4 122.15 L15.4 119.55 M9.4 121.95 L12.4 124.55 L15.4 121.95" fill="none" stroke="#858585" stroke-width="1.1"/><circle cx="39.8" cy="137.28" r="3.1" fill="none" stroke="#a9aeb6" stroke-width="2"/><circle cx="39.8" cy="137.28" r="4.3" fill="none" stroke="#a9aeb6" stroke-width="1.6" stroke-dasharray="1.7 1.68"/><path d="M21.6 134.28 L24.8 137.28 L21.6 140.28 M23.0 135.28 L25.200000000000003 137.28 L23.0 139.28" fill="none" stroke="#858585" stroke-width="1.1"/><path d="M35.0 148.91 h3.6 l0.9 1.1 h5.1 v6.9 h-9.6Z" fill="#cfcfcf" /><rect x="35.0" y="151.21" width="9.6" height="4.5" fill="#e2e2e2" /><path d="M21.6 149.81 L24.8 152.81 L21.6 155.81 M23.0 150.81 L25.200000000000003 152.81 L23.0 154.81" fill="none" stroke="#858585" stroke-width="1.1"/><path d="M35.1 168.34 Q39.9 162.34 44.699999999999996 168.34 Q39.9 174.34 35.1 168.34Z" fill="none" stroke="#eceded" stroke-width="1.15"/><circle cx="39.9" cy="168.34" r="1.55" fill="#eceded"/><path d="M51.0 164.44 h3.6 l0.9 1.1 h5.1 v6.9 h-9.6Z" fill="#cfcfcf" /><rect x="51.0" y="166.74" width="9.6" height="4.5" fill="#e2e2e2" /><path d="M20.6 166.14000000000001 L23.6 168.74 L26.6 166.14000000000001 M20.6 168.54 L23.6 171.14000000000001 L26.6 168.54" fill="none" stroke="#858585" stroke-width="1.1"/><path d="M47.1 183.87 Q51.9 177.87 56.699999999999996 183.87 Q51.9 189.87 47.1 183.87Z" fill="none" stroke="#eceded" stroke-width="1.15"/><circle cx="51.9" cy="183.87" r="1.55" fill="#eceded"/><circle cx="67.8" cy="183.87" r="2.6" fill="none" stroke="#f3a05a" stroke-width="1.2"/><path d="M62.8 183.87 H72.8 M67.8 178.87 V188.87" stroke="#f3a05a" stroke-width="1" fill="none"/><path d="M47.1 199.4 Q51.9 193.4 56.699999999999996 199.4 Q51.9 205.4 47.1 199.4Z" fill="none" stroke="#eceded" stroke-width="1.15"/><circle cx="51.9" cy="199.4" r="1.55" fill="#eceded"/><rect x="66.2" y="195.20000000000002" width="6" height="6.2" fill="#d5d5d5" /><line x1="63.199999999999996" y1="204.0" x2="69.39999999999999" y2="197.8" stroke="#c98a52" stroke-width="1.1"/><path d="M47.1 214.92999999999998 Q51.9 208.92999999999998 56.699999999999996 214.92999999999998 Q51.9 220.92999999999998 47.1 214.92999999999998Z" fill="none" stroke="#eceded" stroke-width="1.15"/><circle cx="51.9" cy="214.92999999999998" r="1.55" fill="#eceded"/><rect x="66.2" y="210.73" width="6" height="6.2" fill="#d5d5d5" /><line x1="63.199999999999996" y1="219.52999999999997" x2="69.39999999999999" y2="213.32999999999998" stroke="#c98a52" stroke-width="1.1"/><path d="M47.1 230.46 Q51.9 224.46 56.699999999999996 230.46 Q51.9 236.46 47.1 230.46Z" fill="none" stroke="#eceded" stroke-width="1.15"/><circle cx="51.9" cy="230.46" r="1.55" fill="#eceded"/><rect x="66.2" y="226.26000000000002" width="6" height="6.2" fill="#d5d5d5" /><line x1="63.199999999999996" y1="235.06" x2="69.39999999999999" y2="228.86" stroke="#c98a52" stroke-width="1.1"/><path d="M47.1 245.98999999999998 Q51.9 239.98999999999998 56.699999999999996 245.98999999999998 Q51.9 251.98999999999998 47.1 245.98999999999998Z" fill="none" stroke="#eceded" stroke-width="1.15"/><circle cx="51.9" cy="245.98999999999998" r="1.55" fill="#eceded"/><rect x="66.39999999999999" y="241.39" width="6.2" height="7.4" fill="none" stroke="#e4e4e4" stroke-width="0.9"/><rect x="63.4" y="243.39" width="6.6" height="7.2" fill="#f2a868" /><path d="M47.1 261.52 Q51.9 255.51999999999998 56.699999999999996 261.52 Q51.9 267.52 47.1 261.52Z" fill="none" stroke="#eceded" stroke-width="1.15"/><circle cx="51.9" cy="261.52" r="1.55" fill="#eceded"/><rect x="66.39999999999999" y="256.91999999999996" width="6.2" height="7.4" fill="none" stroke="#e4e4e4" stroke-width="0.9"/><rect x="63.4" y="258.91999999999996" width="6.6" height="7.2" fill="#f2a868" /><path d="M47.1 277.05 Q51.9 271.05 56.699999999999996 277.05 Q51.9 283.05 47.1 277.05Z" fill="none" stroke="#eceded" stroke-width="1.15"/><circle cx="51.9" cy="277.05" r="1.55" fill="#eceded"/><rect x="66.39999999999999" y="272.45" width="6.2" height="7.4" fill="none" stroke="#e4e4e4" stroke-width="0.9"/><rect x="63.4" y="274.45" width="6.6" height="7.2" fill="#f2a868" /><path d="M35.1 292.58000000000004 Q39.9 286.58000000000004 44.699999999999996 292.58000000000004 Q39.9 298.58000000000004 35.1 292.58000000000004Z" fill="none" stroke="#eceded" stroke-width="1.15"/><circle cx="39.9" cy="292.58000000000004" r="1.55" fill="#eceded"/><path d="M51.0 288.68000000000006 h3.6 l0.9 1.1 h5.1 v6.9 h-9.6Z" fill="#cfcfcf" /><rect x="51.0" y="290.98" width="9.6" height="4.5" fill="#e2e2e2" /><path d="M20.6 290.38000000000005 L23.6 292.98 L26.6 290.38000000000005 M20.6 292.78000000000003 L23.6 295.38000000000005 L26.6 292.78000000000003" fill="none" stroke="#858585" stroke-width="1.1"/><path d="M47.1 308.11 Q51.9 302.11 56.699999999999996 308.11 Q51.9 314.11 47.1 308.11Z" fill="none" stroke="#aab0b9" stroke-width="1.15"/><circle cx="51.9" cy="308.11" r="1.55" fill="#aab0b9"/><line x1="48.1" y1="304.71000000000004" x2="55.699999999999996" y2="311.51" stroke="#aab0b9" stroke-width="1"/><rect x="63.099999999999994" y="305.71000000000004" width="9.4" height="5" fill="#5fbcf5" /><ellipse cx="67.8" cy="310.71000000000004" rx="4.7" ry="1.7" fill="#5fbcf5"/><ellipse cx="67.8" cy="305.71000000000004" rx="4.7" ry="1.7" fill="#aee2fd"/><path d="M47.1 323.64 Q51.9 317.64 56.699999999999996 323.64 Q51.9 329.64 47.1 323.64Z" fill="none" stroke="#aab0b9" stroke-width="1.15"/><circle cx="51.9" cy="323.64" r="1.55" fill="#aab0b9"/><line x1="48.1" y1="320.24" x2="55.699999999999996" y2="327.03999999999996" stroke="#aab0b9" stroke-width="1"/><rect x="63.099999999999994" y="321.24" width="9.4" height="5" fill="#5fbcf5" /><ellipse cx="67.8" cy="326.24" rx="4.7" ry="1.7" fill="#5fbcf5"/><ellipse cx="67.8" cy="321.24" rx="4.7" ry="1.7" fill="#aee2fd"/><path d="M47.1 339.17 Q51.9 333.17 56.699999999999996 339.17 Q51.9 345.17 47.1 339.17Z" fill="none" stroke="#aab0b9" stroke-width="1.15"/><circle cx="51.9" cy="339.17" r="1.55" fill="#aab0b9"/><line x1="48.1" y1="335.77000000000004" x2="55.699999999999996" y2="342.57" stroke="#aab0b9" stroke-width="1"/><rect x="63.099999999999994" y="336.77000000000004" width="9.4" height="5" fill="#5fbcf5" /><ellipse cx="67.8" cy="341.77000000000004" rx="4.7" ry="1.7" fill="#5fbcf5"/><ellipse cx="67.8" cy="336.77000000000004" rx="4.7" ry="1.7" fill="#aee2fd"/><path d="M47.1 354.70000000000005 Q51.9 348.70000000000005 56.699999999999996 354.70000000000005 Q51.9 360.70000000000005 47.1 354.70000000000005Z" fill="none" stroke="#eceded" stroke-width="1.15"/><circle cx="51.9" cy="354.70000000000005" r="1.55" fill="#eceded"/><rect x="63.099999999999994" y="352.30000000000007" width="9.4" height="5" fill="#5fbcf5" /><ellipse cx="67.8" cy="357.30000000000007" rx="4.7" ry="1.7" fill="#5fbcf5"/><ellipse cx="67.8" cy="352.30000000000007" rx="4.7" ry="1.7" fill="#aee2fd"/><path d="M47.1 370.23 Q51.9 364.23 56.699999999999996 370.23 Q51.9 376.23 47.1 370.23Z" fill="none" stroke="#eceded" stroke-width="1.15"/><circle cx="51.9" cy="370.23" r="1.55" fill="#eceded"/><rect x="63.099999999999994" y="367.83000000000004" width="9.4" height="5" fill="#5fbcf5" /><ellipse cx="67.8" cy="372.83000000000004" rx="4.7" ry="1.7" fill="#5fbcf5"/><ellipse cx="67.8" cy="367.83000000000004" rx="4.7" ry="1.7" fill="#aee2fd"/><path d="M35.1 385.76 Q39.9 379.76 44.699999999999996 385.76 Q39.9 391.76 35.1 385.76Z" fill="none" stroke="#eceded" stroke-width="1.15"/><circle cx="39.9" cy="385.76" r="1.55" fill="#eceded"/><path d="M51.0 381.86 h3.6 l0.9 1.1 h5.1 v6.9 h-9.6Z" fill="#cfcfcf" /><rect x="51.0" y="384.15999999999997" width="9.6" height="4.5" fill="#e2e2e2" /><path d="M21.6 382.76 L24.8 385.76 L21.6 388.76 M23.0 383.76 L25.200000000000003 385.76 L23.0 387.76" fill="none" stroke="#858585" stroke-width="1.1"/><path d="M35.1 401.28999999999996 Q39.9 395.28999999999996 44.699999999999996 401.28999999999996 Q39.9 407.28999999999996 35.1 401.28999999999996Z" fill="none" stroke="#eceded" stroke-width="1.15"/><circle cx="39.9" cy="401.28999999999996" r="1.55" fill="#eceded"/><path d="M51.0 397.39 h3.6 l0.9 1.1 h5.1 v6.9 h-9.6Z" fill="#cfcfcf" /><rect x="51.0" y="399.68999999999994" width="9.6" height="4.5" fill="#e2e2e2" /><path d="M20.6 399.09 L23.6 401.68999999999994 L26.6 399.09 M20.6 401.48999999999995 L23.6 404.09 L26.6 401.48999999999995" fill="none" stroke="#858585" stroke-width="1.1"/><path d="M47.1 416.82000000000005 Q51.9 410.82000000000005 56.699999999999996 416.82000000000005 Q51.9 422.82000000000005 47.1 416.82000000000005Z" fill="none" stroke="#aab0b9" stroke-width="1.15"/><circle cx="51.9" cy="416.82000000000005" r="1.55" fill="#aab0b9"/><line x1="48.1" y1="413.4200000000001" x2="55.699999999999996" y2="420.22" stroke="#aab0b9" stroke-width="1"/><rect x="66.39999999999999" y="412.22" width="6.2" height="7.4" fill="none" stroke="#e4e4e4" stroke-width="0.9"/><rect x="63.4" y="414.22" width="6.6" height="7.2" fill="#f2a868" /><path d="M49 298.73 l1.6 -2.4 h1.4 l-1.6 2.4Z" fill="#29a8ea" /><path d="M52.6 298.73 l1.6 -2.4 h1.4 l-1.6 2.4Z" fill="#29a8ea" /><path d="M56.2 298.73 l1.6 -2.4 h1.4 l-1.6 2.4Z" fill="#29a8ea" /><path d="M59.800000000000004 298.73 l1.6 -2.4 h1.4 l-1.6 2.4Z" fill="#29a8ea" /><path d="M63.400000000000006 298.73 l1.6 -2.4 h1.4 l-1.6 2.4Z" fill="#29a8ea" /><path d="M67.0 298.73 l1.6 -2.4 h1.4 l-1.6 2.4Z" fill="#29a8ea" /><path d="M70.6 298.73 l1.6 -2.4 h1.4 l-1.6 2.4Z" fill="#29a8ea" /><path d="M74.19999999999999 298.73 l1.6 -2.4 h1.4 l-1.6 2.4Z" fill="#29a8ea" /><path d="M77.79999999999998 298.73 l1.6 -2.4 h1.4 l-1.6 2.4Z" fill="#29a8ea" /><path d="M81.39999999999998 298.73 l1.6 -2.4 h1.4 l-1.6 2.4Z" fill="#29a8ea" /><path d="M84.99999999999997 298.73 l1.6 -2.4 h1.4 l-1.6 2.4Z" fill="#29a8ea" /><path d="M88.59999999999997 298.73 l1.6 -2.4 h1.4 l-1.6 2.4Z" fill="#29a8ea" /><path d="M92.19999999999996 298.73 l1.6 -2.4 h1.4 l-1.6 2.4Z" fill="#29a8ea" /><path d="M60.5 376.38 l1.6 -2.4 h1.4 l-1.6 2.4Z" fill="#29a8ea" /><path d="M64.1 376.38 l1.6 -2.4 h1.4 l-1.6 2.4Z" fill="#29a8ea" /><path d="M67.69999999999999 376.38 l1.6 -2.4 h1.4 l-1.6 2.4Z" fill="#29a8ea" /><path d="M71.29999999999998 376.38 l1.6 -2.4 h1.4 l-1.6 2.4Z" fill="#29a8ea" /><path d="M74.89999999999998 376.38 l1.6 -2.4 h1.4 l-1.6 2.4Z" fill="#29a8ea" /><path d="M78.49999999999997 376.38 l1.6 -2.4 h1.4 l-1.6 2.4Z" fill="#29a8ea" /><path d="M82.09999999999997 376.38 l1.6 -2.4 h1.4 l-1.6 2.4Z" fill="#29a8ea" /><path d="M85.69999999999996 376.38 l1.6 -2.4 h1.4 l-1.6 2.4Z" fill="#29a8ea" /><path d="M89.29999999999995 376.38 l1.6 -2.4 h1.4 l-1.6 2.4Z" fill="#29a8ea" /><path d="M92.89999999999995 376.38 l1.6 -2.4 h1.4 l-1.6 2.4Z" fill="#29a8ea" /><path d="M96.49999999999994 376.38 l1.6 -2.4 h1.4 l-1.6 2.4Z" fill="#29a8ea" /><path d="M100.09999999999994 376.38 l1.6 -2.4 h1.4 l-1.6 2.4Z" fill="#29a8ea" /><path d="M103.69999999999993 376.38 l1.6 -2.4 h1.4 l-1.6 2.4Z" fill="#29a8ea" /><path d="M107.29999999999993 376.38 l1.6 -2.4 h1.4 l-1.6 2.4Z" fill="#29a8ea" /><path d="M110.89999999999992 376.38 l1.6 -2.4 h1.4 l-1.6 2.4Z" fill="#29a8ea" /><path d="M114.49999999999991 376.38 l1.6 -2.4 h1.4 l-1.6 2.4Z" fill="#29a8ea" /></svg>
<svg width="1024" height="699" viewBox="0 0 1024 699"><defs><filter id="sb" x="-5%" y="-5%" width="110%" height="110%"><feGaussianBlur stdDeviation="0.7"/></filter>
<linearGradient id="refl" x1="0" y1="0" x2="0" y2="1"><stop offset="0" stop-color="#000" stop-opacity="0.03"/><stop offset="0.7" stop-color="#000" stop-opacity="0.02"/><stop offset="1" stop-color="#000" stop-opacity="0"/></linearGradient><linearGradient id="rim" x1="0" y1="0" x2="1" y2="0"><stop offset="0" stop-color="#5c5952"/><stop offset="0.12" stop-color="#66635b"/><stop offset="0.45" stop-color="#4a4641"/><stop offset="0.85" stop-color="#4e4a45"/><stop offset="1" stop-color="#423f3a"/></linearGradient>
<linearGradient id="top" x1="0" y1="0" x2="1" y2="1"><stop offset="0" stop-color="#7e7973"/><stop offset="0.5" stop-color="#86817a"/><stop offset="1" stop-color="#807b75"/></linearGradient>
<linearGradient id="pole" x1="0" y1="0" x2="1" y2="0"><stop offset="0" stop-color="#2a76d0"/><stop offset="0.4" stop-color="#2470cb"/><stop offset="1" stop-color="#1f64ba"/></linearGradient>
</defs><ellipse cx="504.3" cy="524.2" rx="151.3" ry="46" fill="#cbcbcb" filter="url(#sb)"/><rect x="498" y="528" width="11.6" height="44" fill="#ffffff" opacity="0.05"/><rect x="498" y="570" width="11.6" height="74" fill="url(#refl)"/><path d="M466.2 479.2 L503.3 465 V525.7 L466.2 532.3Z" fill="#f9b64a" fill-opacity="0.5"/><path d="M503.3 465 L556.5 473.2 V528 L503.3 525.7Z" fill="#f9b64a" fill-opacity="0.5"/><path d="M503.3 527 L550.8 536.3 L519.3 552.2 L472.8 541.3Z" fill="#f9b64a" fill-opacity="0.5"/><line x1="500.4" y1="526.6" x2="461.2" y2="542.3" stroke="#f03a32" stroke-width="1.3" stroke-dasharray="7 1.4 1.6 1.4"/><line x1="508.6" y1="525.6" x2="563.4" y2="537.3" stroke="#33e03f" stroke-width="1.3" stroke-dasharray="7 1.4 1.6 1.4"/><ellipse cx="503.8" cy="321" rx="147" ry="46.3" fill="url(#rim)"/><path d="M353 311.5 H654.6 L650.4 323 H357.2Z" fill="url(#rim)"/><ellipse cx="503.8" cy="310.3" rx="151" ry="46.3" fill="url(#top)" stroke="#55514b" stroke-width="0.6"/><path d="M496.4 323.6 H511.4 L510.7 523.6 A6.75 3.4 0 0 1 497.2 523.6Z" fill="url(#pole)"/><path d="M496.4 323.6 V357 M511.4 323.6 V357" stroke="#8fb4e6" stroke-width="0.6" fill="none" opacity="0.8"/><rect x="496.5" y="356.6" width="14.8" height="10.8" fill="#0c54b0" opacity="0.5"/><ellipse cx="503.9" cy="323.8" rx="7.2" ry="2.9" fill="#7d8ea8" stroke="#a9c6ee" stroke-width="0.8"/><ellipse cx="503.8" cy="524.2" rx="2.6" ry="2.2" fill="#8fa6c8" opacity="0.8"/><line x1="385.4" y1="398" x2="496" y2="422.2" stroke="#4a4a4a" stroke-width="0.7"/><path d="M385.4 398 l5.4 0.1 l-0.6 2.2Z M497 422.4 l-5.4 -0.1 l0.6 -2.2Z" fill="#333"/><path d="M500.4 419.4 L507.8 421 L508.7 417.2 L518 425.4 L505.6 431.2 L506.5 427.4 L499.2 425.8Z" fill="#1f96e8" stroke="#f4f8fc" stroke-width="1.1" stroke-linejoin="round"/></svg>
<div class="t" style="left:426.5px;top:398.2px;font-size:9.6px;color:#222;font-weight:normal;letter-spacing:0.27px;">252.50</div>
<div class="a" style="left:575.2px;top:448.4px;width:129.8px;height:14.6px;background:#7c8490"></div>
<div class="a" style="left:575.2px;top:448.4px;width:77.4px;height:14.6px;background:#394456"></div>
<div class="a" style="left:584px;top:449.4px;width:52.2px;height:12.6px;background:#202938"></div>
<div class="t" style="left:597.2px;top:450.9px;font-size:7.6px;color:#f4f5f7;letter-spacing:0.00px;">12.5-265</div>
<div class="a" style="left:644px;top:452.2px;width:1.2px;height:1.2px;background:#8f98a5"></div>
<div class="a" style="left:644px;top:455.4px;width:1.2px;height:1.2px;background:#8f98a5"></div>
<div class="a" style="left:644px;top:458.6px;width:1.2px;height:1.2px;background:#8f98a5"></div>
<svg width="1024" height="699" viewBox="0 0 1024 699"><path d="M571.2 503.4 V484.6 M566.2 490.4 L571.2 483.6 L576.2 490.4" fill="none" stroke="#ff1fd0" stroke-width="2"/></svg>
<div class="t" id="pk1" style="left:584.6px;top:472.9px;height:40px;line-height:40px;font-size:28.6px;color:#ff1fd0;font-weight:bold;-webkit-text-stroke:1.4px #ff1fd0;transform:scaleX(1.245);transform-origin:0 50%">265-12.5</div>
<div class="t" id="pk1b" style="left:725px;top:472.9px;height:40px;line-height:40px;font-size:28.6px;color:#ff1fd0;font-weight:bold;-webkit-text-stroke:1.4px #ff1fd0;transform:scaleX(1.085);transform-origin:0 50%">mm</div>
<div class="t" id="pk2" style="left:778.8px;top:473px;height:40px;line-height:40px;font-size:26.4px;color:#ff1fd0;font-weight:900;letter-spacing:-2.8px;-webkit-text-stroke:0.3px #ff1fd0;font-family:'Noto Sans CJK JP',sans-serif">と代入している</div>
<div class="a" style="left:753.8px;top:228.7px;width:161.4px;height:96.8px;background:#394456;box-shadow:0 0 0 0.5px #2b3544"></div>
<div class="a" style="left:753.8px;top:242.8px;width:161.4px;height:0.8px;background:#323d4d"></div>
<div class="a" style="left:753.8px;top:300.8px;width:161.4px;height:0.8px;background:#303a49"></div>
<div class="a" style="left:758px;top:236.4px;width:5px;height:1.1px;background:#d9dce1"></div>
<div class="t" style="left:771.7px;top:232.0px;font-size:7.2px;color:#eceef1;letter-spacing:-0.09px;">面をオフセット</div>
<div class="t" style="left:762px;top:249.6px;font-size:7.1px;color:#e4e7eb;">面</div>
<div class="t" style="left:762px;top:269.8px;font-size:7.1px;color:#e4e7eb;letter-spacing:0.01px;">距離</div>
<div class="a" style="left:796px;top:245.8px;width:52.8px;height:18px;background:#27465e;border:1px solid #188ab8;border-radius:1px"></div>
<div class="t" style="left:810.8px;top:249.8px;font-size:7.1px;color:#f2f3f5;letter-spacing:0.06px;">1 選択済み</div>
<div class="a" style="left:796px;top:266.2px;width:98.4px;height:17px;background:#273140"></div>
<div class="t" style="left:803.5px;top:269.8px;font-size:7.8px;color:#f4f5f7;letter-spacing:-0.10px;">12.5 mm - 265 mm</div>
<div class="a" style="left:811.4px;top:306.4px;width:28.2px;height:15.4px;border:1px solid #566274;border-radius:1.5px"></div>
<div class="a" style="left:853.2px;top:306.4px;width:53.6px;height:15.4px;border:1px solid #566274;border-radius:1.5px"></div>
<div class="t" style="left:819.8px;top:309.2px;font-size:7.6px;color:#f4f5f7;letter-spacing:-0.19px;">OK</div>
<div class="t" style="left:862px;top:309.2px;font-size:7.1px;color:#f4f5f7;letter-spacing:0.03px;">キャンセル</div>
<svg width="1024" height="699" viewBox="0 0 1024 699"><circle cx="767.9" cy="313.9" r="3.6" fill="#8fb0d4"/><rect x="767.4" y="313.2" width="1" height="2.8" fill="#394456"/><rect x="767.4" y="311.6" width="1" height="1" fill="#394456"/><path d="M801 250 V258.8 L803 257 L804.4 260 L805.7 259.4 L804.3 256.5 L807 256.3Z" fill="#ececec"/><path d="M856.4 252.6 l4 4 m0 -4 l-4 4" stroke="#8d96a3" stroke-width="0.8" fill="none"/></svg>
<svg width="1024" height="699" viewBox="0 0 1024 699"><defs><filter id="bl" x="-50%" y="-50%" width="200%" height="200%"><feGaussianBlur stdDeviation="2.2"/></filter></defs><ellipse cx="985" cy="156" rx="22" ry="6" fill="#9a9a9a" opacity="0.45" filter="url(#bl)"/><path d="M959.4 120 L979.8 116.6 L1003.8 118.3 L986.1 124Z" fill="#f0f0f0" stroke="#dcdcdc" stroke-width="0.5"/><path d="M959.4 120 L986.1 124 V156.7 L960.9 149.8Z" fill="#e9e9e9" stroke="#dcdcdc" stroke-width="0.5"/><path d="M986.1 124 L1003.8 118.3 L1002.7 147.5 L986.1 156.7Z" fill="#dfdfdf" stroke="#d6d6d6" stroke-width="0.5"/><rect x="981.5" y="123.4" width="5" height="5.5" fill="#d3d9ee" opacity="0.8"/><line x1="979.6" y1="112" x2="979.8" y2="117" stroke="#8a8aff" stroke-width="1"/><line x1="958" y1="150.6" x2="961.4" y2="149.4" stroke="#ff8080" stroke-width="1"/><line x1="1002.6" y1="147.4" x2="1007" y2="148.8" stroke="#6fe88a" stroke-width="1"/><text x="966" y="144.6" font-family='"Liberation Sans","Noto Sans CJK JP",sans-serif' font-size="14.5" font-weight="normal" fill="#8c8c8c" transform="skewY(9)" style="transform-origin:973px 138px;transform-box:view-box">右</text><text x="989.6" y="142" font-family='"Liberation Sans","Noto Sans CJK JP",sans-serif' font-size="11" font-weight="normal" fill="#8c8c8c" transform="skewY(-18)" style="transform-origin:995px 137px">後</text></svg>
<div class="t" style="left:976px;top:101.8px;font-size:9.6px;color:#6a6aff;font-weight:normal;transform:scaleX(0.84);transform-origin:50% 50%;-webkit-text-stroke:0.3px currentColor;">Z</div>
<div class="t" style="left:951.2px;top:148.6px;font-size:9.6px;color:#ff6a6a;font-weight:normal;transform:scaleX(0.84);transform-origin:50% 50%;-webkit-text-stroke:0.3px currentColor;">X</div>
<div class="t" style="left:1007.8px;top:144.8px;font-size:9.6px;color:#4fdf6c;font-weight:normal;transform:scaleX(0.84);transform-origin:50% 50%;-webkit-text-stroke:0.3px currentColor;">Y</div>
<div class="a" style="left:0;top:648.7px;width:192px;height:15.1px;background:#394456"></div>
<div class="t" style="left:16.6px;top:651.9px;font-size:7.1px;color:#d9dce1;letter-spacing:-0.26px;">コメント</div>
<div class="a" style="left:0;top:667.3px;width:1024px;height:31.7px;background:#394456"></div>
<div class="a" style="left:432px;top:648px;width:155px;height:15.3px;background:#394456"></div>
<div class="t" style="left:937.5px;top:654.1px;font-size:7.4px;color:#1f1f1f;letter-spacing:0.20px;">1 面 | 半径 : 12.50 mr</div>
<svg width="1024" height="699" viewBox="0 0 1024 699"><rect x="178.20" y="655.70" width="5.2" height="1.1" fill="#c5c9cf" /><rect x="180.25" y="653.65" width="1.1" height="5.2" fill="#c5c9cf" /><rect x="2.90" y="681.60" width="1.8" height="7.8" fill="#a8adb9" /><path d="M10.5 681.6 V689.4 L4.8 685.5Z" fill="#a8adb9" /><path d="M25.4 682 V689 L18.6 685.5Z" fill="#a8adb9" /><rect x="26.00" y="683.60" width="1.4" height="3.8" fill="#a8adb9" /><path d="M34.8 680.2 V690.4 L43 685.3Z" fill="#a8adb9" /><rect x="50.80" y="683.60" width="1.4" height="3.8" fill="#a8adb9" /><path d="M53 682 V689 L59.6 685.5Z" fill="#a8adb9" /><path d="M67.9 681.6 V689.4 L73.6 685.5Z" fill="#a8adb9" /><rect x="73.80" y="681.60" width="1.8" height="7.8" fill="#a8adb9" /><circle cx="1010.4" cy="685.4" r="3" fill="none" stroke="#aab0be" stroke-width="2"/><circle cx="1010.4" cy="685.4" r="4.4" fill="none" stroke="#aab0be" stroke-width="1.8" stroke-dasharray="1.75 1.7"/><path d="M1024 699 V695.4 Q1023.6 698.4 1020.4 699Z" fill="#d9d9d9" /><ellipse cx="439.6" cy="656.0" rx="5" ry="2.4" fill="none" stroke="#e8e8e8" stroke-width="1"/><line x1="439.60" y1="650.40" x2="439.60" y2="660.80" stroke="#39a9ee" stroke-width="1.1" /><path d="M448.2 654.6 h4 l-2 2.6Z" fill="#9aa2ae" /><rect x="457.20" y="652.80" width="9.4" height="6.6" fill="none" stroke="#f0f0f0" stroke-width="1.2"/><rect x="459.00" y="654.50" width="5.8" height="3.2" fill="#4fb4f2" /><path d="M459.4 652.4 l1.2 -1.8 h1 l0.6 1.8Z M463 652.4 l1.2 -1.6 h0.8 v1.6Z" fill="#f0f0f0" /><path d="M475.4 655.4 L482.2 655.8 L481.8 658.8 Q480.8 660.9 478.6 660.9 Q476.4 660.9 475.4 658.6Z" fill="#e6e6e6" /><line x1="476.40" y1="656.00" x2="475.30" y2="651.60" stroke="#e6e6e6" stroke-width="1.35" stroke-linecap="round"/><line x1="478.20" y1="655.60" x2="478.20" y2="650.60" stroke="#e6e6e6" stroke-width="1.35" stroke-linecap="round"/><line x1="479.90" y1="655.80" x2="481.00" y2="651.20" stroke="#e6e6e6" stroke-width="1.35" stroke-linecap="round"/><line x1="481.40" y1="656.80" x2="483.20" y2="652.80" stroke="#e6e6e6" stroke-width="1.35" stroke-linecap="round"/><line x1="476.20" y1="658.20" x2="473.60" y2="655.60" stroke="#e6e6e6" stroke-width="1.35" stroke-linecap="round"/><circle cx="493.6" cy="655.0" r="2.8" fill="#5d6878" stroke="#e4e4e4" stroke-width="1"/><line x1="495.60" y1="657.20" x2="498.00" y2="660.00" stroke="#e2964e" stroke-width="1.3" /><path d="M497.6 650.8 v3.4 m-1.4 -1.7 h2.8" fill="none" stroke="#e8e8e8" stroke-width="0.8"/><rect x="506.40" y="650.20" width="10.6" height="10.4" fill="none" stroke="#dcdcdc" stroke-width="0.8" stroke-dasharray="1.6 0.9"/><circle cx="511.4" cy="655.0" r="3.7" fill="#5d6878" stroke="#e4e4e4" stroke-width="1"/><line x1="514.00" y1="657.80" x2="516.40" y2="660.20" stroke="#e2964e" stroke-width="1.2" /><path d="M521 654.6 h4 l-2 2.6Z" fill="#9aa2ae" /><rect x="528.60" y="651.60" width="10.2" height="6.8" fill="#8d96a3" stroke="#e4e4e4" stroke-width="1"/><rect x="531.60" y="659.00" width="4.2" height="1" fill="#e4e4e4" /><path d="M540.9 654.6 h4 l-2 2.6Z" fill="#9aa2ae" /><rect x="548.60" y="650.60" width="9.2" height="9.4" fill="none" stroke="#ececec" stroke-width="1"/><line x1="551.67" y1="650.60" x2="551.67" y2="660.00" stroke="#ececec" stroke-width="0.8" /><line x1="548.60" y1="653.73" x2="557.80" y2="653.73" stroke="#ececec" stroke-width="0.8" /><line x1="554.74" y1="650.60" x2="554.74" y2="660.00" stroke="#ececec" stroke-width="0.8" /><line x1="548.60" y1="656.86" x2="557.80" y2="656.86" stroke="#ececec" stroke-width="0.8" /><path d="M560.8 654.6 h4 l-2 2.6Z" fill="#9aa2ae" /><rect x="568.80" y="651.40" width="4.8" height="2.4" fill="#dcdcdc" /><rect x="574.20" y="651.40" width="4.8" height="2.4" fill="#dcdcdc" /><rect x="568.80" y="654.40" width="4.8" height="2.4" fill="#dcdcdc" /><rect x="574.20" y="654.40" width="4.8" height="2.4" fill="#dcdcdc" /><rect x="568.80" y="657.40" width="4.8" height="2.4" fill="#dcdcdc" /><rect x="574.20" y="657.40" width="4.8" height="2.4" fill="#dcdcdc" /><path d="M581 654.6 h4 l-2 2.6Z" fill="#9aa2ae" /><line x1="94.90" y1="694.90" x2="652.54" y2="694.90" stroke="#5f6a7c" stroke-width="1" /><line x1="94.90" y1="691.00" x2="94.90" y2="694.90" stroke="#5f6a7c" stroke-width="1" /><line x1="110.39" y1="691.00" x2="110.39" y2="694.90" stroke="#5f6a7c" stroke-width="1" /><line x1="125.88" y1="691.00" x2="125.88" y2="694.90" stroke="#5f6a7c" stroke-width="1" /><line x1="141.37" y1="691.00" x2="141.37" y2="694.90" stroke="#5f6a7c" stroke-width="1" /><line x1="156.86" y1="691.00" x2="156.86" y2="694.90" stroke="#5f6a7c" stroke-width="1" /><line x1="172.35" y1="691.00" x2="172.35" y2="694.90" stroke="#5f6a7c" stroke-width="1" /><line x1="187.84" y1="691.00" x2="187.84" y2="694.90" stroke="#5f6a7c" stroke-width="1" /><line x1="203.33" y1="691.00" x2="203.33" y2="694.90" stroke="#5f6a7c" stroke-width="1" /><line x1="218.82" y1="691.00" x2="218.82" y2="694.90" stroke="#5f6a7c" stroke-width="1" /><line x1="234.31" y1="691.00" x2="234.31" y2="694.90" stroke="#5f6a7c" stroke-width="1" /><line x1="249.80" y1="691.00" x2="249.80" y2="694.90" stroke="#5f6a7c" stroke-width="1" /><line x1="265.29" y1="691.00" x2="265.29" y2="694.90" stroke="#5f6a7c" stroke-width="1" /><line x1="280.78" y1="691.00" x2="280.78" y2="694.90" stroke="#5f6a7c" stroke-width="1" /><line x1="296.27" y1="691.00" x2="296.27" y2="694.90" stroke="#5f6a7c" stroke-width="1" /><line x1="311.76" y1="691.00" x2="311.76" y2="694.90" stroke="#5f6a7c" stroke-width="1" /><line x1="327.25" y1="691.00" x2="327.25" y2="694.90" stroke="#5f6a7c" stroke-width="1" /><line x1="342.74" y1="691.00" x2="342.74" y2="694.90" stroke="#5f6a7c" stroke-width="1" /><line x1="358.23" y1="691.00" x2="358.23" y2="694.90" stroke="#5f6a7c" stroke-width="1" /><line x1="373.72" y1="691.00" x2="373.72" y2="694.90" stroke="#5f6a7c" stroke-width="1" /><line x1="389.21" y1="691.00" x2="389.21" y2="694.90" stroke="#5f6a7c" stroke-width="1" /><line x1="404.70" y1="691.00" x2="404.70" y2="694.90" stroke="#5f6a7c" stroke-width="1" /><line x1="420.19" y1="691.00" x2="420.19" y2="694.90" stroke="#5f6a7c" stroke-width="1" /><line x1="435.68" y1="691.00" x2="435.68" y2="694.90" stroke="#5f6a7c" stroke-width="1" /><line x1="451.17" y1="691.00" x2="451.17" y2="694.90" stroke="#5f6a7c" stroke-width="1" /><line x1="466.66" y1="691.00" x2="466.66" y2="694.90" stroke="#5f6a7c" stroke-width="1" /><line x1="482.15" y1="691.00" x2="482.15" y2="694.90" stroke="#5f6a7c" stroke-width="1" /><line x1="497.64" y1="691.00" x2="497.64" y2="694.90" stroke="#5f6a7c" stroke-width="1" /><line x1="513.13" y1="691.00" x2="513.13" y2="694.90" stroke="#5f6a7c" stroke-width="1" /><line x1="528.62" y1="691.00" x2="528.62" y2="694.90" stroke="#5f6a7c" stroke-width="1" /><line x1="544.11" y1="691.00" x2="544.11" y2="694.90" stroke="#5f6a7c" stroke-width="1" /><line x1="559.60" y1="691.00" x2="559.60" y2="694.90" stroke="#5f6a7c" stroke-width="1" /><line x1="575.09" y1="691.00" x2="575.09" y2="694.90" stroke="#5f6a7c" stroke-width="1" /><line x1="590.58" y1="691.00" x2="590.58" y2="694.90" stroke="#5f6a7c" stroke-width="1" /><line x1="606.07" y1="691.00" x2="606.07" y2="694.90" stroke="#5f6a7c" stroke-width="1" /><line x1="621.56" y1="691.00" x2="621.56" y2="694.90" stroke="#5f6a7c" stroke-width="1" /><line x1="637.05" y1="691.00" x2="637.05" y2="694.90" stroke="#5f6a7c" stroke-width="1" /><line x1="652.54" y1="691.00" x2="652.54" y2="694.90" stroke="#5f6a7c" stroke-width="1" /><rect x="90.30" y="679.30" width="8.4" height="8.4" fill="none" stroke="#a3aab4" stroke-width="1.1" stroke-dasharray="2.2 1"/><rect x="89.50" y="678.50" width="1.6" height="1.6" fill="#39b4f4" /><rect x="97.90" y="678.50" width="1.6" height="1.6" fill="#39b4f4" /><rect x="89.50" y="686.90" width="1.6" height="1.6" fill="#39b4f4" /><line x1="95.90" y1="688.30" x2="99.10" y2="684.90" stroke="#f2c94c" stroke-width="1.7" /><line x1="98.90" y1="685.10" x2="99.90" y2="684.00" stroke="#f0513c" stroke-width="1.7" /><path d="M94.9 689.3000000000001 l0.4 -1.6 l1.2 1.2Z" fill="#f0f0f0" /><rect x="105.59" y="680.90" width="7.2" height="7" fill="#6cc5f6" /><path d="M105.59 680.9 l2 -2 h7.2 l-2 2Z" fill="#a6defc" /><path d="M112.79 680.9 l2 -2 v7 l-2 2Z" fill="#3f9fe3" /><rect x="105.59" y="687.90" width="7.2" height="1.6" fill="#f0f0f0" /><path d="M112.79 687.9 l2 -2 v1.6 l-2 2Z" fill="#bcbcbc" /><line x1="115.99" y1="679.70" x2="115.99" y2="687.70" stroke="#dcdcdc" stroke-width="0.7" /><rect x="121.28" y="679.30" width="8.4" height="8.4" fill="none" stroke="#a3aab4" stroke-width="1.1" stroke-dasharray="2.2 1"/><rect x="120.48" y="678.50" width="1.6" height="1.6" fill="#39b4f4" /><rect x="128.88" y="678.50" width="1.6" height="1.6" fill="#39b4f4" /><rect x="120.48" y="686.90" width="1.6" height="1.6" fill="#39b4f4" /><line x1="126.88" y1="688.30" x2="130.08" y2="684.90" stroke="#f2c94c" stroke-width="1.7" /><line x1="129.88" y1="685.10" x2="130.88" y2="684.00" stroke="#f0513c" stroke-width="1.7" /><path d="M125.88000000000001 689.3000000000001 l0.4 -1.6 l1.2 1.2Z" fill="#f0f0f0" /><rect x="136.57" y="680.90" width="7.2" height="7" fill="#6cc5f6" /><path d="M136.57 680.9 l2 -2 h7.2 l-2 2Z" fill="#a6defc" /><path d="M143.77 680.9 l2 -2 v7 l-2 2Z" fill="#3f9fe3" /><rect x="136.57" y="687.90" width="7.2" height="1.6" fill="#f0f0f0" /><path d="M143.77 687.9 l2 -2 v1.6 l-2 2Z" fill="#bcbcbc" /><line x1="146.97" y1="679.70" x2="146.97" y2="687.70" stroke="#dcdcdc" stroke-width="0.7" /><rect x="153.86" y="680.10" width="8.4" height="6.6" fill="#6cc5f6" /><rect x="153.86" y="678.90" width="8.4" height="1.4" fill="#a6defc" /><rect x="161.26" y="680.10" width="1" height="6.6" fill="#3f9fe3" /><rect x="151.46" y="682.90" width="7.4" height="6.4" fill="#6cc5f6" /><rect x="151.46" y="682.10" width="2.4" height="1" fill="#a6defc" /><rect x="158.06" y="686.70" width="0.9" height="2.6" fill="#3f9fe3" /><path d="M177.35000000000002 689.3000000000001 V682.7 L174.55 679.5 L168.95000000000002 684.7 L167.35000000000002 686.5 V689.3000000000001Z" fill="#dedcd9" /><path d="M174.55 679.5 L171.75000000000003 678.9 L167.15000000000003 683.5 L169.75000000000003 684.7Z" fill="#6cc5f6" /><path d="M167.15000000000003 683.5 L169.75000000000003 684.7 V689.3000000000001 H167.15000000000003Z" fill="#c4c2bf" /><path d="M182.84 689.3000000000001 V682.3000000000001 L184.84 680.1 Q189.24 679.9 191.04 684.5 V689.3000000000001Z" fill="#dedede" /><path d="M184.84 680.1 L186.84 679.1 Q191.64000000000001 679.1 193.24 683.1 L191.04 684.5 Q189.24 679.9 184.84 680.1Z" fill="#6cc5f6" /><path d="M191.04 684.5 L193.24 683.1 V687.5 L191.04 689.3000000000001Z" fill="#b4b4b4" /><line x1="200.13" y1="684.10" x2="206.53" y2="684.10" stroke="#f4f4f4" stroke-width="1.2" /><line x1="203.33" y1="680.90" x2="203.33" y2="687.30" stroke="#f4f4f4" stroke-width="1.2" /><path d="M198.53 684.1 l2.2 -1.9 v3.8Z M208.13000000000002 684.1 l-2.2 -1.9 v3.8Z M203.33 679.3000000000001 l-1.9 2.2 h3.8Z M203.33 688.9 l-1.9 -2.2 h3.8Z" fill="#f4f4f4" /><rect x="214.22" y="679.30" width="8.4" height="8.4" fill="none" stroke="#a3aab4" stroke-width="1.1" stroke-dasharray="2.2 1"/><rect x="213.42" y="678.50" width="1.6" height="1.6" fill="#39b4f4" /><rect x="221.82" y="678.50" width="1.6" height="1.6" fill="#39b4f4" /><rect x="213.42" y="686.90" width="1.6" height="1.6" fill="#39b4f4" /><line x1="219.82" y1="688.30" x2="223.02" y2="684.90" stroke="#f2c94c" stroke-width="1.7" /><line x1="222.82" y1="685.10" x2="223.82" y2="684.00" stroke="#f0513c" stroke-width="1.7" /><path d="M218.82 689.3000000000001 l0.4 -1.6 l1.2 1.2Z" fill="#f0f0f0" /><rect x="229.51" y="680.90" width="7.2" height="7" fill="#6cc5f6" /><path d="M229.51 680.9 l2 -2 h7.2 l-2 2Z" fill="#a6defc" /><path d="M236.71 680.9 l2 -2 v7 l-2 2Z" fill="#3f9fe3" /><rect x="229.51" y="687.90" width="7.2" height="1.6" fill="#f0f0f0" /><path d="M236.71 687.9 l2 -2 v1.6 l-2 2Z" fill="#bcbcbc" /><line x1="239.91" y1="679.70" x2="239.91" y2="687.70" stroke="#dcdcdc" stroke-width="0.7" /><path d="M244.8 689.3000000000001 V682.3000000000001 L246.8 680.1 Q251.20000000000002 679.9 253.0 684.5 V689.3000000000001Z" fill="#dedede" /><path d="M246.8 680.1 L248.8 679.1 Q253.60000000000002 679.1 255.20000000000002 683.1 L253.0 684.5 Q251.20000000000002 679.9 246.8 680.1Z" fill="#6cc5f6" /><path d="M253.0 684.5 L255.20000000000002 683.1 V687.5 L253.0 689.3000000000001Z" fill="#b4b4b4" /><rect x="260.69" y="679.30" width="8.4" height="8.4" fill="none" stroke="#a3aab4" stroke-width="1.1" stroke-dasharray="2.2 1"/><rect x="259.89" y="678.50" width="1.6" height="1.6" fill="#39b4f4" /><rect x="268.29" y="678.50" width="1.6" height="1.6" fill="#39b4f4" /><rect x="259.89" y="686.90" width="1.6" height="1.6" fill="#39b4f4" /><line x1="266.29" y1="688.30" x2="269.49" y2="684.90" stroke="#f2c94c" stroke-width="1.7" /><line x1="269.29" y1="685.10" x2="270.29" y2="684.00" stroke="#f0513c" stroke-width="1.7" /><path d="M265.29 689.3000000000001 l0.4 -1.6 l1.2 1.2Z" fill="#f0f0f0" /><rect x="275.98" y="680.90" width="7.2" height="7" fill="#6cc5f6" /><path d="M275.97999999999996 680.9 l2 -2 h7.2 l-2 2Z" fill="#a6defc" /><path d="M283.17999999999995 680.9 l2 -2 v7 l-2 2Z" fill="#3f9fe3" /><rect x="275.98" y="687.90" width="7.2" height="1.6" fill="#f0f0f0" /><path d="M283.17999999999995 687.9 l2 -2 v1.6 l-2 2Z" fill="#bcbcbc" /><line x1="286.38" y1="679.70" x2="286.38" y2="687.70" stroke="#dcdcdc" stroke-width="0.7" /><rect x="291.67" y="679.30" width="8.4" height="8.4" fill="none" stroke="#a3aab4" stroke-width="1.1" stroke-dasharray="2.2 1"/><rect x="290.87" y="678.50" width="1.6" height="1.6" fill="#39b4f4" /><rect x="299.27" y="678.50" width="1.6" height="1.6" fill="#39b4f4" /><rect x="290.87" y="686.90" width="1.6" height="1.6" fill="#39b4f4" /><line x1="297.27" y1="688.30" x2="300.47" y2="684.90" stroke="#f2c94c" stroke-width="1.7" /><line x1="300.27" y1="685.10" x2="301.27" y2="684.00" stroke="#f0513c" stroke-width="1.7" /><path d="M296.27 689.3000000000001 l0.4 -1.6 l1.2 1.2Z" fill="#f0f0f0" /><rect x="306.96" y="680.90" width="7.2" height="7" fill="#6cc5f6" /><path d="M306.96 680.9 l2 -2 h7.2 l-2 2Z" fill="#a6defc" /><path d="M314.15999999999997 680.9 l2 -2 v7 l-2 2Z" fill="#3f9fe3" /><rect x="306.96" y="687.90" width="7.2" height="1.6" fill="#f0f0f0" /><path d="M314.15999999999997 687.9 l2 -2 v1.6 l-2 2Z" fill="#bcbcbc" /><line x1="317.36" y1="679.70" x2="317.36" y2="687.70" stroke="#dcdcdc" stroke-width="0.7" /><rect x="324.05" y="679.70" width="3" height="3.4" fill="#e0e0e0" rx="0.8"/><rect x="324.05" y="683.70" width="3" height="2.6" fill="#e0e0e0" rx="0.8"/><rect x="327.85" y="685.50" width="3.6" height="3.6" fill="#e0e0e0" rx="0.8"/><line x1="325.65" y1="686.50" x2="328.05" y2="687.50" stroke="#3f9fe3" stroke-width="0.8" /><line x1="339.54" y1="684.10" x2="345.94" y2="684.10" stroke="#f4f4f4" stroke-width="1.2" /><line x1="342.74" y1="680.90" x2="342.74" y2="687.30" stroke="#f4f4f4" stroke-width="1.2" /><path d="M337.94 684.1 l2.2 -1.9 v3.8Z M347.54 684.1 l-2.2 -1.9 v3.8Z M342.74 679.3000000000001 l-1.9 2.2 h3.8Z M342.74 688.9 l-1.9 -2.2 h3.8Z" fill="#f4f4f4" /><rect x="355.23" y="680.10" width="8.4" height="6.6" fill="#6cc5f6" /><rect x="355.23" y="678.90" width="8.4" height="1.4" fill="#a6defc" /><rect x="362.63" y="680.10" width="1" height="6.6" fill="#3f9fe3" /><rect x="352.83" y="682.90" width="7.4" height="6.4" fill="#6cc5f6" /><rect x="352.83" y="682.10" width="2.4" height="1" fill="#a6defc" /><rect x="359.43" y="686.70" width="0.9" height="2.6" fill="#3f9fe3" /><rect x="369.12" y="679.30" width="8.4" height="8.4" fill="none" stroke="#a3aab4" stroke-width="1.1" stroke-dasharray="2.2 1"/><rect x="368.32" y="678.50" width="1.6" height="1.6" fill="#39b4f4" /><rect x="376.72" y="678.50" width="1.6" height="1.6" fill="#39b4f4" /><rect x="368.32" y="686.90" width="1.6" height="1.6" fill="#39b4f4" /><line x1="374.72" y1="688.30" x2="377.92" y2="684.90" stroke="#f2c94c" stroke-width="1.7" /><line x1="377.72" y1="685.10" x2="378.72" y2="684.00" stroke="#f0513c" stroke-width="1.7" /><path d="M373.72 689.3000000000001 l0.4 -1.6 l1.2 1.2Z" fill="#f0f0f0" /><path d="M383.81000000000006 683.5 Q389.21000000000004 678.5 394.61 683.5 V687.7 L392.61 689.1 Q389.21000000000004 686.1 385.81000000000006 689.1 L383.81000000000006 687.7Z" fill="#3f9fe3" /><path d="M383.81000000000006 683.5 Q389.21000000000004 678.5 394.61 683.5 L392.61 685.1 Q389.21000000000004 682.1 385.81000000000006 685.1Z" fill="#a6defc" /><path d="M385.21000000000004 680.5 Q389.21000000000004 677.5 393.21000000000004 680.5" fill="none" stroke="#e8e8e8" stroke-width="0.7"/><rect x="400.10" y="679.30" width="8.4" height="8.4" fill="none" stroke="#a3aab4" stroke-width="1.1" stroke-dasharray="2.2 1"/><rect x="399.30" y="678.50" width="1.6" height="1.6" fill="#39b4f4" /><rect x="407.70" y="678.50" width="1.6" height="1.6" fill="#39b4f4" /><rect x="399.30" y="686.90" width="1.6" height="1.6" fill="#39b4f4" /><line x1="405.70" y1="688.30" x2="408.90" y2="684.90" stroke="#f2c94c" stroke-width="1.7" /><line x1="408.70" y1="685.10" x2="409.70" y2="684.00" stroke="#f0513c" stroke-width="1.7" /><path d="M404.70000000000005 689.3000000000001 l0.4 -1.6 l1.2 1.2Z" fill="#f0f0f0" /><path d="M414.99000000000007 682.3000000000001 l2.4 -2.6 h6 v2.4 h2.2 v5 l-2 2 v-4.2 h-5 v1.6 h-3.6Z" fill="#6cc5f6" /><rect x="417.99" y="684.90" width="4.8" height="4.8" fill="#dcdcdc" stroke="#76808c" stroke-width="0.5"/><path d="M435.38000000000005 679.1 L430.4800000000001 689.1 H435.38000000000005Z" fill="#dedede" /><path d="M435.9800000000001 679.1 V689.1 H440.88000000000005Z" fill="#6cc5f6" /><circle cx="453.77" cy="684.1" r="2.5" fill="#7eace3"/><rect x="447.77" y="683.40" width="3.8" height="1.4" fill="#d2d2d2" /><path d="M445.56999999999994 684.1 l2.8 -2.2 v4.4Z" fill="#d2d2d2" /><rect x="463.66" y="680.10" width="8.4" height="6.6" fill="#6cc5f6" /><rect x="463.66" y="678.90" width="8.4" height="1.4" fill="#a6defc" /><rect x="471.06" y="680.10" width="1" height="6.6" fill="#3f9fe3" /><rect x="461.26" y="682.90" width="7.4" height="6.4" fill="#6cc5f6" /><rect x="461.26" y="682.10" width="2.4" height="1" fill="#a6defc" /><rect x="467.86" y="686.70" width="0.9" height="2.6" fill="#3f9fe3" /><line x1="478.95" y1="684.10" x2="485.35" y2="684.10" stroke="#f4f4f4" stroke-width="1.2" /><line x1="482.15" y1="680.90" x2="482.15" y2="687.30" stroke="#f4f4f4" stroke-width="1.2" /><path d="M477.34999999999997 684.1 l2.2 -1.9 v3.8Z M486.95 684.1 l-2.2 -1.9 v3.8Z M482.15 679.3000000000001 l-1.9 2.2 h3.8Z M482.15 688.9 l-1.9 -2.2 h3.8Z" fill="#f4f4f4" /><rect x="493.04" y="679.30" width="8.4" height="8.4" fill="none" stroke="#a3aab4" stroke-width="1.1" stroke-dasharray="2.2 1"/><rect x="492.24" y="678.50" width="1.6" height="1.6" fill="#39b4f4" /><rect x="500.64" y="678.50" width="1.6" height="1.6" fill="#39b4f4" /><rect x="492.24" y="686.90" width="1.6" height="1.6" fill="#39b4f4" /><line x1="498.64" y1="688.30" x2="501.84" y2="684.90" stroke="#f2c94c" stroke-width="1.7" /><line x1="501.64" y1="685.10" x2="502.64" y2="684.00" stroke="#f0513c" stroke-width="1.7" /><path d="M497.64 689.3000000000001 l0.4 -1.6 l1.2 1.2Z" fill="#f0f0f0" /><path d="M507.73 683.5 Q513.13 678.5 518.53 683.5 V687.7 L516.53 689.1 Q513.13 686.1 509.73 689.1 L507.73 687.7Z" fill="#3f9fe3" /><path d="M507.73 683.5 Q513.13 678.5 518.53 683.5 L516.53 685.1 Q513.13 682.1 509.73 685.1Z" fill="#a6defc" /><path d="M509.13 680.5 Q513.13 677.5 517.13 680.5" fill="none" stroke="#e8e8e8" stroke-width="0.7"/><rect x="524.02" y="679.30" width="8.4" height="8.4" fill="none" stroke="#a3aab4" stroke-width="1.1" stroke-dasharray="2.2 1"/><rect x="523.22" y="678.50" width="1.6" height="1.6" fill="#39b4f4" /><rect x="531.62" y="678.50" width="1.6" height="1.6" fill="#39b4f4" /><rect x="523.22" y="686.90" width="1.6" height="1.6" fill="#39b4f4" /><line x1="529.62" y1="688.30" x2="532.82" y2="684.90" stroke="#f2c94c" stroke-width="1.7" /><line x1="532.62" y1="685.10" x2="533.62" y2="684.00" stroke="#f0513c" stroke-width="1.7" /><path d="M528.62 689.3000000000001 l0.4 -1.6 l1.2 1.2Z" fill="#f0f0f0" /><rect x="539.51" y="679.30" width="8.4" height="8.4" fill="none" stroke="#a3aab4" stroke-width="1.1" stroke-dasharray="2.2 1"/><rect x="538.71" y="678.50" width="1.6" height="1.6" fill="#39b4f4" /><rect x="547.11" y="678.50" width="1.6" height="1.6" fill="#39b4f4" /><rect x="538.71" y="686.90" width="1.6" height="1.6" fill="#39b4f4" /><line x1="545.11" y1="688.30" x2="548.31" y2="684.90" stroke="#f2c94c" stroke-width="1.7" /><line x1="548.11" y1="685.10" x2="549.11" y2="684.00" stroke="#f0513c" stroke-width="1.7" /><path d="M544.11 689.3000000000001 l0.4 -1.6 l1.2 1.2Z" fill="#f0f0f0" /><path d="M554.4 682.7 l2.4 -3 h1.4 v7.6 l-2.4 3 h-1.4Z" fill="#e8e8e8" /><path d="M557.2 682.9 l3 -3.4 v7.2 l-3 3.4Z" fill="#3fcf7f" /><path d="M561.6 682.7 l3.2 -3.4 v6.8 l-3.2 3.4Z" fill="#f4a46a" /><rect x="570.49" y="679.30" width="8.4" height="8.4" fill="none" stroke="#a3aab4" stroke-width="1.1" stroke-dasharray="2.2 1"/><rect x="569.69" y="678.50" width="1.6" height="1.6" fill="#39b4f4" /><rect x="578.09" y="678.50" width="1.6" height="1.6" fill="#39b4f4" /><rect x="569.69" y="686.90" width="1.6" height="1.6" fill="#39b4f4" /><line x1="576.09" y1="688.30" x2="579.29" y2="684.90" stroke="#f2c94c" stroke-width="1.7" /><line x1="579.09" y1="685.10" x2="580.09" y2="684.00" stroke="#f0513c" stroke-width="1.7" /><path d="M575.09 689.3000000000001 l0.4 -1.6 l1.2 1.2Z" fill="#f0f0f0" /><path d="M585.1800000000001 679.1 h10.8 v6.4 l-2.4 2 h-6 l-2.4 -2Z" fill="#4aa9e9" /><path d="M586.1800000000001 679.7 h8.8 l-4.4 5.6Z" fill="#a6defc" /><circle cx="590.58" cy="686.9" r="3" fill="#dcdcdc" stroke="#6e7883" stroke-width="0.5"/><line x1="602.87" y1="684.10" x2="609.27" y2="684.10" stroke="#f4f4f4" stroke-width="1.2" /><line x1="606.07" y1="680.90" x2="606.07" y2="687.30" stroke="#f4f4f4" stroke-width="1.2" /><path d="M601.2700000000001 684.1 l2.2 -1.9 v3.8Z M610.87 684.1 l-2.2 -1.9 v3.8Z M606.07 679.3000000000001 l-1.9 2.2 h3.8Z M606.07 688.9 l-1.9 -2.2 h3.8Z" fill="#f4f4f4" /><line x1="618.36" y1="684.10" x2="624.76" y2="684.10" stroke="#f4f4f4" stroke-width="1.2" /><line x1="621.56" y1="680.90" x2="621.56" y2="687.30" stroke="#f4f4f4" stroke-width="1.2" /><path d="M616.76 684.1 l2.2 -1.9 v3.8Z M626.3599999999999 684.1 l-2.2 -1.9 v3.8Z M621.56 679.3000000000001 l-1.9 2.2 h3.8Z M621.56 688.9 l-1.9 -2.2 h3.8Z" fill="#f4f4f4" /><line x1="633.85" y1="684.10" x2="640.25" y2="684.10" stroke="#f4f4f4" stroke-width="1.2" /><line x1="637.05" y1="680.90" x2="637.05" y2="687.30" stroke="#f4f4f4" stroke-width="1.2" /><path d="M632.25 684.1 l2.2 -1.9 v3.8Z M641.8499999999999 684.1 l-2.2 -1.9 v3.8Z M637.05 679.3000000000001 l-1.9 2.2 h3.8Z M637.05 688.9 l-1.9 -2.2 h3.8Z" fill="#f4f4f4" /><rect x="647.74" y="680.90" width="7.4" height="8.6" fill="#6cc5f6" /><path d="M647.74 680.9 l2 -2 h7.4 l-2 2Z" fill="#a6defc" /><path d="M655.14 680.9 l2 -2 v8.6 l-2 2Z" fill="#3f9fe3" /><rect x="647.74" y="688.50" width="7.4" height="1.2" fill="#e8e8e8" /><line x1="647.94" y1="677.70" x2="649.54" y2="675.50" stroke="#29a8ea" stroke-width="0.9" /><line x1="650.14" y1="677.70" x2="651.74" y2="675.50" stroke="#29a8ea" stroke-width="0.9" /><line x1="652.34" y1="677.70" x2="653.94" y2="675.50" stroke="#29a8ea" stroke-width="0.9" /><line x1="654.54" y1="677.70" x2="656.14" y2="675.50" stroke="#29a8ea" stroke-width="0.9" /><rect x="659.60" y="677.00" width="1.8" height="19" fill="#e8eaee" /><path d="M656.8 675.2 h7.4 l-2.6 3.6 h-2.2Z" fill="#c9cdd4" /></svg>
</body></html>
